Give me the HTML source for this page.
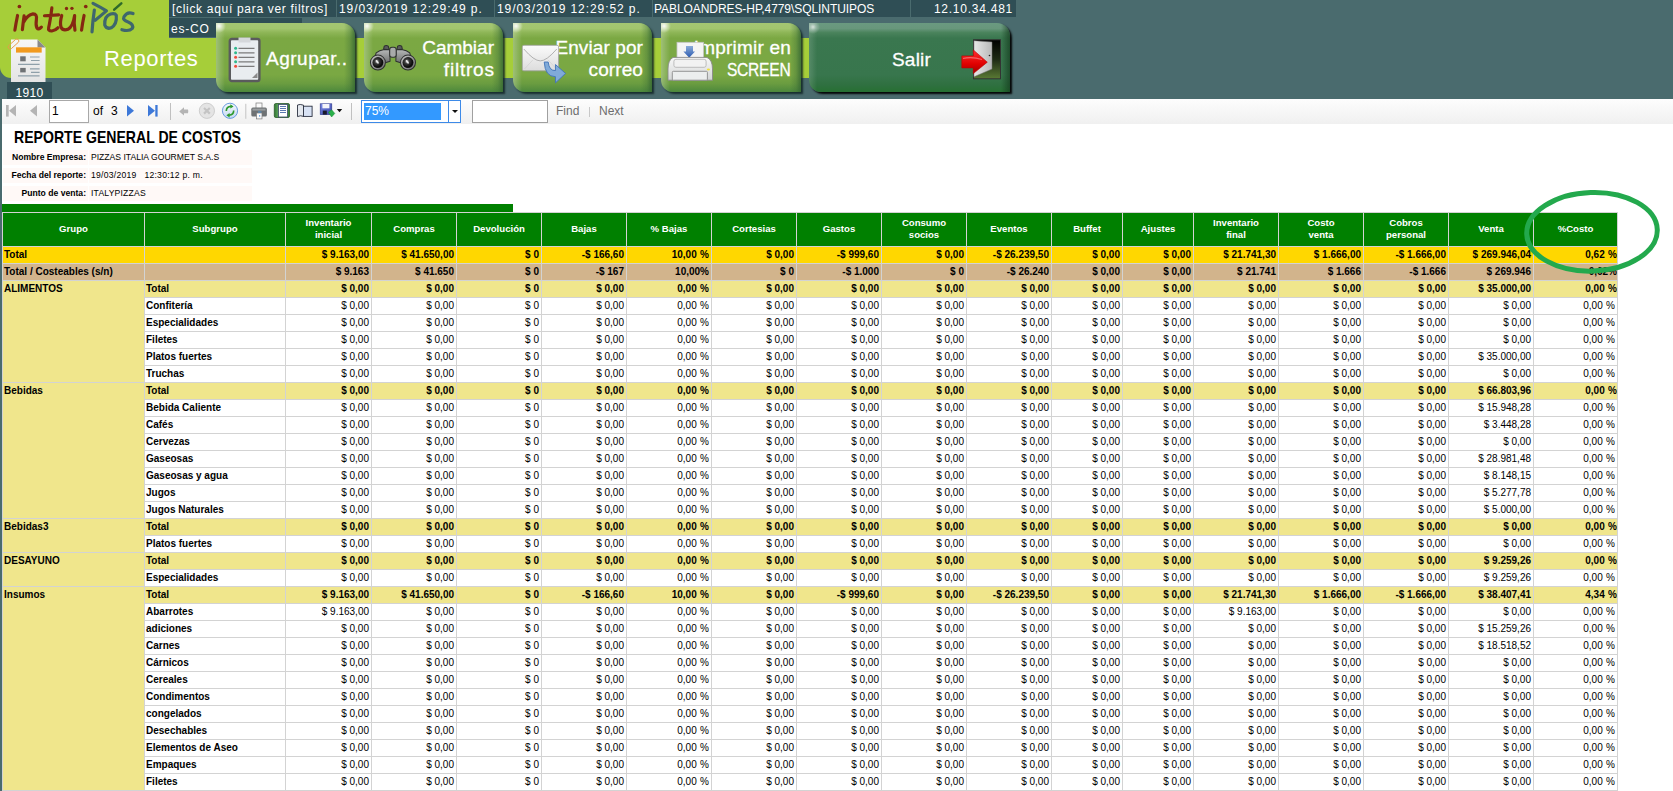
<!DOCTYPE html>
<html><head><meta charset="utf-8"><style>
*{margin:0;padding:0;box-sizing:border-box}
html,body{width:1673px;height:791px;overflow:hidden;background:#fff;font-family:"Liberation Sans",sans-serif;position:relative}
.cell,.hc,.tx{position:absolute}
.hc{background:#008000;color:#fff;font-weight:bold;font-size:9.6px;line-height:12px;padding-bottom:2px;display:flex;align-items:center;justify-content:center;text-align:center}
.tx{font-size:10px;line-height:16px;padding:0 2px 0 1px;color:#000;white-space:nowrap}
.b{font-weight:bold}
.ib{position:absolute;background:#2f4e55;color:#fff;font-size:12px;line-height:19px;white-space:nowrap;overflow:hidden;letter-spacing:0.3px}
.btn{position:absolute;top:23px;height:69px;border-radius:0 13px 0 12px;background:radial-gradient(circle at 3px 3px,rgba(255,255,255,.95) 0,rgba(255,255,255,.5) 3px,rgba(255,255,255,0) 7px),linear-gradient(90deg,rgba(255,255,255,.28) 0,rgba(255,255,255,.12) 5px,rgba(255,255,255,0) 9px),linear-gradient(270deg,rgba(50,100,50,.8) 0,rgba(60,110,55,.35) 5px,rgba(60,110,55,0) 11px),linear-gradient(#a4c672 0%,#a2c56e 8%,#8db556 14%,#7ba843 22%,#7aa843 75%,#6a9c40 88%,#4c883c 100%);box-shadow:2px 2px 2px rgba(15,35,35,.85)}
.btn.dk{background:radial-gradient(circle at 4px 4px,rgba(255,255,255,.7) 0,rgba(255,255,255,.3) 3px,rgba(255,255,255,0) 7px),linear-gradient(90deg,rgba(255,255,255,.15) 0,rgba(255,255,255,0) 8px),linear-gradient(270deg,rgba(20,60,30,.7) 0,rgba(20,60,30,0) 9px),linear-gradient(#6a9a80 0%,#68977c 8%,#4a835c 14%,#3a774f 22%,#38764d 75%,#2f7040 90%,#267032 100%);box-shadow:2px 2px 2px rgba(0,0,0,.95)}
.bt{position:absolute;color:#fff;font-size:19px;line-height:22px;white-space:nowrap;-webkit-text-stroke:0.3px #fff}
.bt.r{text-align:right}
.tb{position:absolute;top:99px;font-size:12px;line-height:25px}
.inf{position:absolute;background:#fff9f7;font-size:8.6px;line-height:15px;white-space:nowrap;padding:0 2px}
.n{font-weight:normal}
</style></head><body>
<div style="position:absolute;left:0;top:0;width:1673px;height:99px;background:#4a6b6e"></div>
<!-- lime area -->
<div style="position:absolute;left:0;top:0;width:169px;height:40px;background:#a6ce39"></div>
<div style="position:absolute;left:0;top:38px;width:809px;height:40px;background:#a6ce39;border-bottom-left-radius:11px"></div>
<!-- info boxes -->
<div class="ib" style="left:169px;top:0;width:167px;height:17px;padding-left:3px;letter-spacing:0.69px">[click aquí para ver filtros]</div>
<div class="ib" style="left:337px;top:0;width:157px;height:17px;padding-left:2px;letter-spacing:0.92px">19/03/2019 12:29:49 p.</div>
<div class="ib" style="left:495px;top:0;width:157px;height:17px;padding-left:2px;letter-spacing:0.92px">19/03/2019 12:29:52 p.</div>
<div class="ib" style="left:653px;top:0;width:257px;height:17px;padding-left:1px;letter-spacing:-0.07px">PABLOANDRES-HP,4779\SQLINTUIPOS</div>
<div class="ib" style="left:911px;top:0;width:105px;height:17px;text-align:right;padding-right:3px;letter-spacing:0.75px">12.10.34.481</div>
<div class="ib" style="left:169px;top:18px;width:133px;height:19px;padding-left:2px;line-height:22px;letter-spacing:0.8px">es-CO</div>
<!-- logo -->
<svg style="position:absolute;left:0;top:0" width="160" height="40" viewBox="0 0 160 40">
<g transform="translate(5,0) scale(0.08368)" fill="none" stroke-linecap="round" stroke-linejoin="round" stroke-width="38">
<g stroke="#852812">
<path d="M150,185 Q130,280 118,360"/>
<path d="M228,190 Q215,280 208,355 M222,265 Q270,175 335,165 Q385,165 375,235 Q365,300 382,335 Q400,360 435,325"/>
<path d="M560,95 Q540,250 522,330 Q512,372 560,370 Q600,365 632,332 M472,188 L640,178"/>
<path d="M678,185 Q655,265 668,322 Q692,372 752,350 Q812,318 832,185 M832,185 Q820,285 836,360"/>
<path d="M945,185 Q925,280 915,360"/>
</g>
<g fill="#852812"><circle cx="172" cy="78" r="22"/><circle cx="735" cy="102" r="20"/><circle cx="800" cy="100" r="20"/><circle cx="965" cy="78" r="22"/></g>
<g stroke="#3f676d">
<path d="M1068,120 Q1048,250 1040,380 M1052,40 Q1150,90 1212,130 Q1130,200 1078,242"/>
<path d="M1262,168 Q1185,192 1192,300 Q1210,352 1270,332 Q1340,292 1330,182 Q1312,152 1262,168"/>
<path d="M1530,162 Q1462,132 1422,200 Q1402,242 1472,262 Q1542,292 1522,340 Q1482,380 1397,355"/>
</g>
<path d="M1305,115 L1390,40" stroke="#2f6a2a" stroke-width="30"/>
</g>
</svg>
<!-- doc icon -->
<svg style="position:absolute;left:6px;top:36px" width="44" height="50" viewBox="0 0 44 50">
<defs><linearGradient id="pg" x1="0" x2="0" y1="0" y2="1"><stop offset="0" stop-color="#f7f7f7"/><stop offset="1" stop-color="#e4e4e4"/></linearGradient></defs>
<path d="M5,3.5 L31.5,3.5 L39.5,11.5 L39.5,46 L5,46 Z" fill="url(#pg)"/>
<path d="M31.5,3.5 L39.5,11.5 L31.5,11.5 Z" fill="#8a8a8a"/>
<rect x="10" y="11.3" width="25.7" height="5.3" fill="#f29a1e"/>
<rect x="14.2" y="20.3" width="5.5" height="5" fill="#6f7275"/>
<rect x="14.2" y="31.9" width="5.5" height="4.5" fill="#6f7275"/>
<g stroke="#8fa0aa" stroke-width="1.2"><path d="M24,21 H33.6 M25,24.5 H33.6 M12,28.4 H33.6 M24,32.8 H33.6 M25,36.3 H33.6 M12,39.8 H33.6"/></g>
<rect x="5.5" y="1.5" width="4" height="13" rx="2" transform="rotate(48 7.5 8)" fill="none" stroke="#e89a48" stroke-width="0.9"/>
</svg>
<div style="position:absolute;left:7px;top:82px;width:45px;height:17px;background:#2f4e55;color:#fff;font-size:12px;line-height:23px;text-align:center;letter-spacing:0.3px">1910</div>
<div style="position:absolute;left:104px;top:43.5px;color:#fff;font-size:22px;letter-spacing:0.65px;line-height:30px">Reportes</div>
<!-- buttons -->
<div class="btn" style="left:216px;width:139px"></div>
<div class="btn" style="left:364px;width:139px"></div>
<div class="btn" style="left:513px;width:139px"></div>
<div class="btn" style="left:661px;width:140px"></div>
<div class="btn dk" style="left:809px;width:201px"></div>
<div class="bt" style="left:266px;top:48px;letter-spacing:0.5px">Agrupar..</div>
<div class="bt r" style="right:1179px;top:36.5px"><span>Cambiar</span><br><span style="letter-spacing:0.8px;margin-right:-0.8px">filtros</span></div>
<div class="bt r" style="right:1030px;top:36.5px;letter-spacing:0.1px">Enviar por<br>correo</div>
<div class="bt r" style="right:882px;top:36.5px"><span style="letter-spacing:0.2px">Imprimir en</span><br><span style="display:inline-block;letter-spacing:-0.3px;margin-right:0.3px;transform:scaleX(0.82);transform-origin:100% 0">SCREEN</span></div>
<div class="bt" style="left:892px;top:48.5px;letter-spacing:0.2px">Salir</div>
<!-- clipboard icon -->
<svg style="position:absolute;left:228px;top:37px" width="34" height="46" viewBox="0 0 34 46">
<rect x="1.8" y="2" width="29.6" height="42" rx="2" fill="#e9edf0" stroke="#5a5b5d" stroke-width="2.4"/>
<rect x="10.5" y="0.5" width="12" height="5" fill="#d5d8db"/>
<g fill="#2fb88c"><circle cx="7.6" cy="11.3" r="1.5"/><circle cx="7.6" cy="15.8" r="1.5"/><circle cx="7.6" cy="24.8" r="1.5"/></g>
<g fill="#ef4b3b"><circle cx="7.6" cy="20.3" r="1.5"/><circle cx="7.6" cy="29.3" r="1.5"/></g>
<g stroke="#7b7b7b" stroke-width="1.2"><path d="M10.5,11.3 H26.5 M10.5,15.8 H26.5 M10.5,20.3 H26.5 M10.5,24.8 H26.5 M10.5,29.3 H26.5"/></g>
<path d="M24,41 L29.5,35.5 L29.5,41 Z" fill="#8a8a8a"/>
</svg>
<!-- binoculars -->
<svg style="position:absolute;left:364px;top:38px" width="60" height="40" viewBox="0 0 1186 791">
<defs>
<radialGradient id="lns" cx="0.4" cy="0.4" r="0.7"><stop offset="0" stop-color="#bdbdbd"/><stop offset="0.3" stop-color="#3a3a3a"/><stop offset="0.75" stop-color="#0a0a0a"/><stop offset="1" stop-color="#2a2a2a"/></radialGradient>
<linearGradient id="rng" x1="0" y1="0" x2="1" y2="1"><stop offset="0" stop-color="#c8c8c8"/><stop offset="1" stop-color="#6a6a6a"/></linearGradient>
<linearGradient id="bdy" x1="0" y1="0" x2="0" y2="1"><stop offset="0" stop-color="#b8baba"/><stop offset="1" stop-color="#6e7070"/></linearGradient>
</defs>
<g stroke="#2e3030" stroke-width="20" stroke-linejoin="round">
<path d="M385,230 L400,160 Q440,135 480,160 L495,230 Z" fill="#5a5c5c"/>
<path d="M650,230 L665,160 Q705,135 745,160 L760,230 Z" fill="#5a5c5c"/>
<path d="M240,295 Q300,240 400,225 L510,232 L515,460 L420,490 L205,430 Z" fill="url(#bdy)"/>
<path d="M905,295 Q845,240 745,225 L635,232 L630,460 L725,490 L940,430 Z" fill="url(#bdy)"/>
<rect x="508" y="185" width="128" height="195" rx="45" fill="#a8aaaa"/>
<circle cx="275" cy="485" r="148" fill="url(#rng)"/>
<circle cx="870" cy="485" r="148" fill="url(#rng)"/>
</g>
<circle cx="275" cy="485" r="108" fill="url(#lns)"/>
<circle cx="870" cy="485" r="108" fill="url(#lns)"/>
<ellipse cx="262" cy="472" rx="42" ry="18" transform="rotate(50 262 472)" fill="#e8e8e8"/>
<ellipse cx="857" cy="472" rx="42" ry="18" transform="rotate(50 857 472)" fill="#e8e8e8"/>
</svg>
<!-- envelope -->
<svg style="position:absolute;left:515px;top:38px" width="60" height="50" viewBox="0 0 949 791">
<defs><linearGradient id="env" x1="0" x2="0" y1="0" y2="1"><stop offset="0" stop-color="#fbfbfb"/><stop offset="1" stop-color="#dcdcdc"/></linearGradient></defs>
<rect x="115" y="115" width="575" height="405" rx="25" fill="url(#env)" stroke="#9a9a9a" stroke-width="12"/>
<path d="M150,490 L285,345 M655,490 L520,345" stroke="#c8c8c8" stroke-width="8" fill="none"/>
<path d="M140,175 Q300,362 400,362 Q500,362 660,175" stroke="#a8a8a8" stroke-width="14" fill="none"/>
<path d="M462,380 L525,380 Q540,520 640,515 L640,420 L800,560 L640,710 L640,612 Q475,612 462,380 Z" fill="#80aad8" stroke="#3f72b8" stroke-width="14" stroke-linejoin="round"/>
</svg>
<!-- printer -->
<svg style="position:absolute;left:665px;top:38px" width="50" height="44" viewBox="0 0 50 44">
<defs><linearGradient id="pr" x1="0" x2="0" y1="0" y2="1"><stop offset="0" stop-color="#f8f8f8"/><stop offset="1" stop-color="#d4d6d6"/></linearGradient>
<linearGradient id="ar" x1="0" x2="0" y1="0" y2="1"><stop offset="0" stop-color="#8aaad8"/><stop offset="1" stop-color="#2a5ab0"/></linearGradient></defs>
<rect x="12" y="4.3" width="26.5" height="17" fill="#f4f4f4" stroke="#c4c4c4" stroke-width="0.8"/>
<path d="M21,8 H28 V13.5 H30 L24.2,19.8 L18.4,13.5 H21 Z" fill="url(#ar)"/>
<path d="M3,42.2 L3,31 Q3,22 8,19.4 L42,19.4 Q47.5,22 47.5,31 L47.5,42.2 Z" fill="url(#pr)" stroke="#8a8a8a" stroke-width="0.9"/>
<rect x="8.9" y="21.3" width="32.2" height="8" rx="2" fill="#f2f2f2" stroke="#a8a8a8" stroke-width="0.7"/>
<rect x="7.3" y="33.3" width="35.1" height="8.9" rx="1" fill="#eceeee" stroke="#8a8a8a" stroke-width="0.9"/>
<ellipse cx="43.4" cy="31.4" rx="1.6" ry="1" fill="#f0e040"/>
</svg>
<!-- door -->
<svg style="position:absolute;left:960px;top:38px" width="44" height="44" viewBox="0 0 44 44">
<defs><linearGradient id="dr" x1="0" x2="0" y1="0" y2="1"><stop offset="0" stop-color="#000"/><stop offset="0.5" stop-color="#1e2a14"/><stop offset="1" stop-color="#5a7a34"/></linearGradient>
<linearGradient id="dw" x1="0" x2="1"><stop offset="0" stop-color="#e8e8e8"/><stop offset="1" stop-color="#b8b8b8"/></linearGradient>
<linearGradient id="ra" x1="0" x2="0" y1="0" y2="1"><stop offset="0" stop-color="#ff3030"/><stop offset="0.6" stop-color="#e00000"/><stop offset="1" stop-color="#a00000"/></linearGradient></defs>
<rect x="13.5" y="1.8" width="27" height="39" fill="url(#dr)" stroke="#333" stroke-width="1"/>
<path d="M14,2.7 L32,4 L32,31 L14,38.8 Z" fill="url(#dw)" stroke="#777" stroke-width="0.5"/>
<circle cx="29.5" cy="17.5" r="0.8" fill="#222"/>
<path d="M1.8,17.9 L13.3,17.9 L13.3,11.9 L27.3,24.2 L13.3,35.6 L13.3,29.9 L1.8,29.9 Z" fill="url(#ra)" stroke="#b00" stroke-width="0.6"/><path d="M3,20.5 Q12,18.5 22,21.5" stroke="rgba(255,255,255,.35)" stroke-width="1.2" fill="none"/>
</svg>
<!-- toolbar -->
<div style="position:absolute;left:0;top:99px;width:1673px;height:25px;background:linear-gradient(#fdfdfd,#f0f0f0)"></div>
<div style="position:absolute;left:0;top:123px;width:2px;height:668px;background:#4a6b6e"></div>
<div style="position:absolute;left:0;top:99px;width:2px;height:25px;background:#4a6b6e"></div>
<svg style="position:absolute;left:0;top:99px" width="640" height="25" viewBox="0 0 640 25">
<g fill="#b4b4b4"><rect x="6" y="6" width="2.7" height="11.6"/><path d="M16,6 L16,17.6 L9,11.8 Z"/><path d="M37,6 L37,17.6 L30,11.8 Z"/></g>
<rect x="49.5" y="1.5" width="39" height="22" fill="#fff" stroke="#a8a8a8"/>
<g fill="#3d78d8"><path d="M127,6 L127,17.6 L134,11.8 Z"/><path d="M148,6 L148,17.6 L155,11.8 Z"/><rect x="155.3" y="6" width="2.3" height="11.6"/></g>
<rect x="170" y="4" width="1" height="17" fill="#c0c0c0"/>
<defs>
<linearGradient id="rf" x1="0" y1="0" x2="0" y2="1"><stop offset="0" stop-color="#f4f8fd"/><stop offset="1" stop-color="#c4d8f2"/></linearGradient>
<linearGradient id="pgr" x1="0" y1="0" x2="1" y2="0"><stop offset="0" stop-color="#2f7a2f"/><stop offset="0.5" stop-color="#8cc48c"/><stop offset="1" stop-color="#2f7a2f"/></linearGradient>
<linearGradient id="fl" x1="0" y1="0" x2="1" y2="1"><stop offset="0" stop-color="#7a8ae8"/><stop offset="1" stop-color="#3a48a8"/></linearGradient>
</defs>
<path d="M179.2,12.4 L184,8.2 L184,10.6 L188,10.6 Q188.6,12.4 188,14.2 L184,14.2 L184,16.6 Z" fill="#b4b4b4"/>
<circle cx="206.9" cy="11.8" r="7.6" fill="#e4e4e4" stroke="#cdcdcd" stroke-width="1"/>
<path d="M204,9 L209.8,14.6 M209.8,9 L204,14.6" stroke="#c4c4c4" stroke-width="2.2"/>
<circle cx="230" cy="11.8" r="7.6" fill="url(#rf)" stroke="#5a92dc" stroke-width="0.9"/>
<path d="M226.3,12 Q226.3,7.6 231,7.4" stroke="#2c9a2c" stroke-width="1.6" fill="none"/><path d="M230.4,5.3 L233.6,7.4 L230.4,9.6 Z" fill="#2c9a2c"/>
<path d="M233.7,11.6 Q233.7,16 229,16.2" stroke="#2c9a2c" stroke-width="1.6" fill="none"/><path d="M229.6,14 L226.4,16.2 L229.6,18.4 Z" fill="#2c9a2c"/>
<rect x="245.3" y="4.8" width="1" height="15" fill="#c4c4c4"/>
<rect x="256" y="4" width="6" height="5.5" fill="#fafafa" stroke="#7a7a7a" stroke-width="0.7"/>
<rect x="251.3" y="8.6" width="15.6" height="9" rx="1.6" fill="#6e7274"/>
<rect x="252.5" y="9.6" width="13" height="2" fill="#9a9ea0"/>
<rect x="258" y="12.6" width="3.5" height="1" fill="#4aa0e8"/>
<rect x="256.5" y="14" width="5.5" height="5.9" fill="#fafafa" stroke="#7a7a7a" stroke-width="0.7"/>
<rect x="259" y="16.3" width="1.2" height="1.2" fill="#3a8ae0"/>
<rect x="274.3" y="4.5" width="15.2" height="14" rx="1.5" fill="url(#pgr)" stroke="#2a5a2a" stroke-width="0.8"/>
<rect x="278.5" y="5.5" width="9" height="12.5" fill="#ffffff" stroke="#3a4a6a" stroke-width="0.8"/>
<path d="M280,7.5 H286 M280,9.5 H286 M280,11.5 H286 M280,13.5 H286" stroke="#5a78b0" stroke-width="1"/>
<path d="M297.5,6 Q300,4.8 303.5,6.2 L303.5,17.4 Q300.5,16 297.5,17.6 Z" fill="#e4e8ee" stroke="#2a3040" stroke-width="0.9"/>
<rect x="303.5" y="7.2" width="8.6" height="10.2" fill="#d8e2f4" stroke="#2a3040" stroke-width="0.9"/>
<rect x="320.2" y="4.8" width="11.6" height="10.8" fill="url(#fl)" stroke="#2a3488" stroke-width="0.6"/>
<rect x="322.4" y="5" width="7" height="4.3" fill="#f4f4fa"/>
<rect x="322.8" y="11.6" width="4" height="4" fill="#1a1a2a"/>
<path d="M328.4,13.2 L331.6,10.8 L334.8,14.4 L331.6,18 Z" fill="#2ab04a" stroke="#178a30" stroke-width="0.5"/>
<path d="M336.8,10 L342.2,10 L339.5,13.2 Z" fill="#111"/>
<rect x="351" y="4" width="1" height="17" fill="#c0c0c0"/>
<rect x="361.5" y="1.5" width="99" height="22" fill="#fff" stroke="#3d8ae8"/>
<rect x="364" y="4" width="77" height="17" fill="#3399ff"/>
<rect x="448" y="2" width="1" height="21" fill="#3d8ae8"/>
<path d="M452,11 L458,11 L455,14 Z" fill="#111"/>
<rect x="472.5" y="1.5" width="75" height="22" fill="#fff" stroke="#a0a0a0"/>
<rect x="589" y="8" width="1" height="10" fill="#c8c8c8"/>
</svg>
<div class="tb" style="left:52px;color:#000">1</div>
<div class="tb" style="left:93px;color:#000">of</div>
<div class="tb" style="left:111px;color:#000">3</div>
<div class="tb" style="left:365px;color:#fff">75%</div>
<div class="tb" style="left:556px;color:#6d6d6d">Find</div>
<div class="tb" style="left:599px;color:#6d6d6d">Next</div>
<!-- report header -->
<div style="position:absolute;left:14px;top:127.5px;font-weight:bold;font-size:15.7px;line-height:20px;transform:scaleX(0.897);transform-origin:0 0;white-space:nowrap">REPORTE GENERAL DE COSTOS</div>
<div class="inf" style="left:3px;top:150px;width:85px;height:15px;text-align:right;font-weight:bold">Nombre Empresa:</div>
<div class="inf" style="left:89px;top:150px;width:163px;height:15px">PIZZAS ITALIA GOURMET S.A.S</div>
<div class="inf" style="left:3px;top:168px;width:85px;height:15px;text-align:right;font-weight:bold">Fecha del reporte:</div>
<div class="inf" style="left:89px;top:168px;width:163px;height:15px;letter-spacing:0.25px">19/03/2019 &nbsp; 12:30:12 p. m.</div>
<div class="inf" style="left:3px;top:186px;width:85px;height:15px;text-align:right;font-weight:bold">Punto de venta:</div>
<div class="inf" style="left:89px;top:186px;width:163px;height:15px;letter-spacing:0.2px">ITALYPIZZAS</div>
<div style="position:absolute;left:2px;top:204px;width:511px;height:8px;background:#008000"></div>

<div style="position:absolute;left:2px;top:212px;width:1616px;height:579px;background:#d3d3d3"></div>
<div class="hc" style="left:3px;top:213px;width:141px;height:33px"><span>Grupo</span></div>
<div class="hc" style="left:145px;top:213px;width:140px;height:33px"><span>Subgrupo</span></div>
<div class="hc" style="left:286px;top:213px;width:85px;height:33px"><span>Inventario<br>inicial</span></div>
<div class="hc" style="left:372px;top:213px;width:84px;height:33px"><span>Compras</span></div>
<div class="hc" style="left:457px;top:213px;width:84px;height:33px"><span>Devolución</span></div>
<div class="hc" style="left:542px;top:213px;width:84px;height:33px"><span>Bajas</span></div>
<div class="hc" style="left:627px;top:213px;width:84px;height:33px"><span>% Bajas</span></div>
<div class="hc" style="left:712px;top:213px;width:84px;height:33px"><span>Cortesias</span></div>
<div class="hc" style="left:797px;top:213px;width:84px;height:33px"><span>Gastos</span></div>
<div class="hc" style="left:882px;top:213px;width:84px;height:33px"><span>Consumo<br>socios</span></div>
<div class="hc" style="left:967px;top:213px;width:84px;height:33px"><span>Eventos</span></div>
<div class="hc" style="left:1052px;top:213px;width:70px;height:33px"><span>Buffet</span></div>
<div class="hc" style="left:1123px;top:213px;width:70px;height:33px"><span>Ajustes</span></div>
<div class="hc" style="left:1194px;top:213px;width:84px;height:33px"><span>Inventario<br>final</span></div>
<div class="hc" style="left:1279px;top:213px;width:84px;height:33px"><span>Costo<br>venta</span></div>
<div class="hc" style="left:1364px;top:213px;width:84px;height:33px"><span>Cobros<br>personal</span></div>
<div class="hc" style="left:1449px;top:213px;width:84px;height:33px"><span>Venta</span></div>
<div class="hc" style="left:1534px;top:213px;width:83px;height:33px"><span>%Costo</span></div>
<div class="cell" style="left:3px;top:281px;width:141px;height:101px;background:#f0e68c"></div>
<div class="cell" style="left:3px;top:383px;width:141px;height:135px;background:#f0e68c"></div>
<div class="cell" style="left:3px;top:519px;width:141px;height:33px;background:#f0e68c"></div>
<div class="cell" style="left:3px;top:553px;width:141px;height:33px;background:#f0e68c"></div>
<div class="cell" style="left:3px;top:587px;width:141px;height:203px;background:#f0e68c"></div>
<div class="cell" style="left:3px;top:247px;width:141px;height:16px;background:#ffd700"></div>
<div class="tx b" style="left:3px;top:247px;width:141px;height:16px;text-align:left;white-space:nowrap;overflow:visible">Total</div>
<div class="cell tx b" style="left:145px;top:247px;width:140px;height:16px;background:#ffd700;text-align:left"></div>
<div class="cell tx b" style="left:286px;top:247px;width:85px;height:16px;background:#ffd700;text-align:right">$ 9.163,00</div>
<div class="cell tx b" style="left:372px;top:247px;width:84px;height:16px;background:#ffd700;text-align:right">$ 41.650,00</div>
<div class="cell tx b" style="left:457px;top:247px;width:84px;height:16px;background:#ffd700;text-align:right">$ 0</div>
<div class="cell tx b" style="left:542px;top:247px;width:84px;height:16px;background:#ffd700;text-align:right">-$ 166,60</div>
<div class="cell tx b" style="left:627px;top:247px;width:84px;height:16px;background:#ffd700;text-align:right;word-spacing:0.6px">10,00 %</div>
<div class="cell tx b" style="left:712px;top:247px;width:84px;height:16px;background:#ffd700;text-align:right">$ 0,00</div>
<div class="cell tx b" style="left:797px;top:247px;width:84px;height:16px;background:#ffd700;text-align:right">-$ 999,60</div>
<div class="cell tx b" style="left:882px;top:247px;width:84px;height:16px;background:#ffd700;text-align:right">$ 0,00</div>
<div class="cell tx b" style="left:967px;top:247px;width:84px;height:16px;background:#ffd700;text-align:right">-$ 26.239,50</div>
<div class="cell tx b" style="left:1052px;top:247px;width:70px;height:16px;background:#ffd700;text-align:right">$ 0,00</div>
<div class="cell tx b" style="left:1123px;top:247px;width:70px;height:16px;background:#ffd700;text-align:right">$ 0,00</div>
<div class="cell tx b" style="left:1194px;top:247px;width:84px;height:16px;background:#ffd700;text-align:right">$ 21.741,30</div>
<div class="cell tx b" style="left:1279px;top:247px;width:84px;height:16px;background:#ffd700;text-align:right">$ 1.666,00</div>
<div class="cell tx b" style="left:1364px;top:247px;width:84px;height:16px;background:#ffd700;text-align:right">-$ 1.666,00</div>
<div class="cell tx b" style="left:1449px;top:247px;width:84px;height:16px;background:#ffd700;text-align:right">$ 269.946,04</div>
<div class="cell tx b" style="left:1534px;top:247px;width:83px;height:16px;background:#ffd700;text-align:right;padding-right:0;word-spacing:0.6px;overflow:hidden">0,62 %</div>
<div class="cell" style="left:3px;top:264px;width:141px;height:16px;background:#d2b48c"></div>
<div class="tx b" style="left:3px;top:264px;width:141px;height:16px;text-align:left;white-space:nowrap;overflow:visible">Total / Costeables (s/n)</div>
<div class="cell tx b" style="left:145px;top:264px;width:140px;height:16px;background:#d2b48c;text-align:left"></div>
<div class="cell tx b" style="left:286px;top:264px;width:85px;height:16px;background:#d2b48c;text-align:right">$ 9.163</div>
<div class="cell tx b" style="left:372px;top:264px;width:84px;height:16px;background:#d2b48c;text-align:right">$ 41.650</div>
<div class="cell tx b" style="left:457px;top:264px;width:84px;height:16px;background:#d2b48c;text-align:right">$ 0</div>
<div class="cell tx b" style="left:542px;top:264px;width:84px;height:16px;background:#d2b48c;text-align:right">-$ 167</div>
<div class="cell tx b" style="left:627px;top:264px;width:84px;height:16px;background:#d2b48c;text-align:right;word-spacing:0.6px">10,00%</div>
<div class="cell tx b" style="left:712px;top:264px;width:84px;height:16px;background:#d2b48c;text-align:right">$ 0</div>
<div class="cell tx b" style="left:797px;top:264px;width:84px;height:16px;background:#d2b48c;text-align:right">-$ 1.000</div>
<div class="cell tx b" style="left:882px;top:264px;width:84px;height:16px;background:#d2b48c;text-align:right">$ 0</div>
<div class="cell tx b" style="left:967px;top:264px;width:84px;height:16px;background:#d2b48c;text-align:right">-$ 26.240</div>
<div class="cell tx b" style="left:1052px;top:264px;width:70px;height:16px;background:#d2b48c;text-align:right">$ 0,00</div>
<div class="cell tx b" style="left:1123px;top:264px;width:70px;height:16px;background:#d2b48c;text-align:right">$ 0,00</div>
<div class="cell tx b" style="left:1194px;top:264px;width:84px;height:16px;background:#d2b48c;text-align:right">$ 21.741</div>
<div class="cell tx b" style="left:1279px;top:264px;width:84px;height:16px;background:#d2b48c;text-align:right">$ 1.666</div>
<div class="cell tx b" style="left:1364px;top:264px;width:84px;height:16px;background:#d2b48c;text-align:right">-$ 1.666</div>
<div class="cell tx b" style="left:1449px;top:264px;width:84px;height:16px;background:#d2b48c;text-align:right">$ 269.946</div>
<div class="cell tx b" style="left:1534px;top:264px;width:83px;height:16px;background:#d2b48c;text-align:right;padding-right:0;word-spacing:0.6px;overflow:hidden">0,62%</div>
<div class="tx b" style="left:3px;top:281px;width:141px;height:16px;text-align:left">ALIMENTOS</div>
<div class="cell tx b" style="left:145px;top:281px;width:140px;height:16px;background:#f0e68c;text-align:left">Total</div>
<div class="cell tx b" style="left:286px;top:281px;width:85px;height:16px;background:#f0e68c;text-align:right">$ 0,00</div>
<div class="cell tx b" style="left:372px;top:281px;width:84px;height:16px;background:#f0e68c;text-align:right">$ 0,00</div>
<div class="cell tx b" style="left:457px;top:281px;width:84px;height:16px;background:#f0e68c;text-align:right">$ 0</div>
<div class="cell tx b" style="left:542px;top:281px;width:84px;height:16px;background:#f0e68c;text-align:right">$ 0,00</div>
<div class="cell tx b" style="left:627px;top:281px;width:84px;height:16px;background:#f0e68c;text-align:right;word-spacing:0.6px">0,00 %</div>
<div class="cell tx b" style="left:712px;top:281px;width:84px;height:16px;background:#f0e68c;text-align:right">$ 0,00</div>
<div class="cell tx b" style="left:797px;top:281px;width:84px;height:16px;background:#f0e68c;text-align:right">$ 0,00</div>
<div class="cell tx b" style="left:882px;top:281px;width:84px;height:16px;background:#f0e68c;text-align:right">$ 0,00</div>
<div class="cell tx b" style="left:967px;top:281px;width:84px;height:16px;background:#f0e68c;text-align:right">$ 0,00</div>
<div class="cell tx b" style="left:1052px;top:281px;width:70px;height:16px;background:#f0e68c;text-align:right">$ 0,00</div>
<div class="cell tx b" style="left:1123px;top:281px;width:70px;height:16px;background:#f0e68c;text-align:right">$ 0,00</div>
<div class="cell tx b" style="left:1194px;top:281px;width:84px;height:16px;background:#f0e68c;text-align:right">$ 0,00</div>
<div class="cell tx b" style="left:1279px;top:281px;width:84px;height:16px;background:#f0e68c;text-align:right">$ 0,00</div>
<div class="cell tx b" style="left:1364px;top:281px;width:84px;height:16px;background:#f0e68c;text-align:right">$ 0,00</div>
<div class="cell tx b" style="left:1449px;top:281px;width:84px;height:16px;background:#f0e68c;text-align:right">$ 35.000,00</div>
<div class="cell tx b" style="left:1534px;top:281px;width:83px;height:16px;background:#f0e68c;text-align:right;padding-right:0;word-spacing:0.6px;overflow:hidden">0,00 %</div>
<div class="cell tx b" style="left:145px;top:298px;width:140px;height:16px;background:#ffffff;text-align:left">Confitería</div>
<div class="cell tx n" style="left:286px;top:298px;width:85px;height:16px;background:#ffffff;text-align:right">$ 0,00</div>
<div class="cell tx n" style="left:372px;top:298px;width:84px;height:16px;background:#ffffff;text-align:right">$ 0,00</div>
<div class="cell tx n" style="left:457px;top:298px;width:84px;height:16px;background:#ffffff;text-align:right">$ 0</div>
<div class="cell tx n" style="left:542px;top:298px;width:84px;height:16px;background:#ffffff;text-align:right">$ 0,00</div>
<div class="cell tx n" style="left:627px;top:298px;width:84px;height:16px;background:#ffffff;text-align:right;word-spacing:0.6px">0,00 %</div>
<div class="cell tx n" style="left:712px;top:298px;width:84px;height:16px;background:#ffffff;text-align:right">$ 0,00</div>
<div class="cell tx n" style="left:797px;top:298px;width:84px;height:16px;background:#ffffff;text-align:right">$ 0,00</div>
<div class="cell tx n" style="left:882px;top:298px;width:84px;height:16px;background:#ffffff;text-align:right">$ 0,00</div>
<div class="cell tx n" style="left:967px;top:298px;width:84px;height:16px;background:#ffffff;text-align:right">$ 0,00</div>
<div class="cell tx n" style="left:1052px;top:298px;width:70px;height:16px;background:#ffffff;text-align:right">$ 0,00</div>
<div class="cell tx n" style="left:1123px;top:298px;width:70px;height:16px;background:#ffffff;text-align:right">$ 0,00</div>
<div class="cell tx n" style="left:1194px;top:298px;width:84px;height:16px;background:#ffffff;text-align:right">$ 0,00</div>
<div class="cell tx n" style="left:1279px;top:298px;width:84px;height:16px;background:#ffffff;text-align:right">$ 0,00</div>
<div class="cell tx n" style="left:1364px;top:298px;width:84px;height:16px;background:#ffffff;text-align:right">$ 0,00</div>
<div class="cell tx n" style="left:1449px;top:298px;width:84px;height:16px;background:#ffffff;text-align:right">$ 0,00</div>
<div class="cell tx n" style="left:1534px;top:298px;width:83px;height:16px;background:#ffffff;text-align:right;word-spacing:0.6px">0,00 %</div>
<div class="cell tx b" style="left:145px;top:315px;width:140px;height:16px;background:#ffffff;text-align:left">Especialidades</div>
<div class="cell tx n" style="left:286px;top:315px;width:85px;height:16px;background:#ffffff;text-align:right">$ 0,00</div>
<div class="cell tx n" style="left:372px;top:315px;width:84px;height:16px;background:#ffffff;text-align:right">$ 0,00</div>
<div class="cell tx n" style="left:457px;top:315px;width:84px;height:16px;background:#ffffff;text-align:right">$ 0</div>
<div class="cell tx n" style="left:542px;top:315px;width:84px;height:16px;background:#ffffff;text-align:right">$ 0,00</div>
<div class="cell tx n" style="left:627px;top:315px;width:84px;height:16px;background:#ffffff;text-align:right;word-spacing:0.6px">0,00 %</div>
<div class="cell tx n" style="left:712px;top:315px;width:84px;height:16px;background:#ffffff;text-align:right">$ 0,00</div>
<div class="cell tx n" style="left:797px;top:315px;width:84px;height:16px;background:#ffffff;text-align:right">$ 0,00</div>
<div class="cell tx n" style="left:882px;top:315px;width:84px;height:16px;background:#ffffff;text-align:right">$ 0,00</div>
<div class="cell tx n" style="left:967px;top:315px;width:84px;height:16px;background:#ffffff;text-align:right">$ 0,00</div>
<div class="cell tx n" style="left:1052px;top:315px;width:70px;height:16px;background:#ffffff;text-align:right">$ 0,00</div>
<div class="cell tx n" style="left:1123px;top:315px;width:70px;height:16px;background:#ffffff;text-align:right">$ 0,00</div>
<div class="cell tx n" style="left:1194px;top:315px;width:84px;height:16px;background:#ffffff;text-align:right">$ 0,00</div>
<div class="cell tx n" style="left:1279px;top:315px;width:84px;height:16px;background:#ffffff;text-align:right">$ 0,00</div>
<div class="cell tx n" style="left:1364px;top:315px;width:84px;height:16px;background:#ffffff;text-align:right">$ 0,00</div>
<div class="cell tx n" style="left:1449px;top:315px;width:84px;height:16px;background:#ffffff;text-align:right">$ 0,00</div>
<div class="cell tx n" style="left:1534px;top:315px;width:83px;height:16px;background:#ffffff;text-align:right;word-spacing:0.6px">0,00 %</div>
<div class="cell tx b" style="left:145px;top:332px;width:140px;height:16px;background:#ffffff;text-align:left">Filetes</div>
<div class="cell tx n" style="left:286px;top:332px;width:85px;height:16px;background:#ffffff;text-align:right">$ 0,00</div>
<div class="cell tx n" style="left:372px;top:332px;width:84px;height:16px;background:#ffffff;text-align:right">$ 0,00</div>
<div class="cell tx n" style="left:457px;top:332px;width:84px;height:16px;background:#ffffff;text-align:right">$ 0</div>
<div class="cell tx n" style="left:542px;top:332px;width:84px;height:16px;background:#ffffff;text-align:right">$ 0,00</div>
<div class="cell tx n" style="left:627px;top:332px;width:84px;height:16px;background:#ffffff;text-align:right;word-spacing:0.6px">0,00 %</div>
<div class="cell tx n" style="left:712px;top:332px;width:84px;height:16px;background:#ffffff;text-align:right">$ 0,00</div>
<div class="cell tx n" style="left:797px;top:332px;width:84px;height:16px;background:#ffffff;text-align:right">$ 0,00</div>
<div class="cell tx n" style="left:882px;top:332px;width:84px;height:16px;background:#ffffff;text-align:right">$ 0,00</div>
<div class="cell tx n" style="left:967px;top:332px;width:84px;height:16px;background:#ffffff;text-align:right">$ 0,00</div>
<div class="cell tx n" style="left:1052px;top:332px;width:70px;height:16px;background:#ffffff;text-align:right">$ 0,00</div>
<div class="cell tx n" style="left:1123px;top:332px;width:70px;height:16px;background:#ffffff;text-align:right">$ 0,00</div>
<div class="cell tx n" style="left:1194px;top:332px;width:84px;height:16px;background:#ffffff;text-align:right">$ 0,00</div>
<div class="cell tx n" style="left:1279px;top:332px;width:84px;height:16px;background:#ffffff;text-align:right">$ 0,00</div>
<div class="cell tx n" style="left:1364px;top:332px;width:84px;height:16px;background:#ffffff;text-align:right">$ 0,00</div>
<div class="cell tx n" style="left:1449px;top:332px;width:84px;height:16px;background:#ffffff;text-align:right">$ 0,00</div>
<div class="cell tx n" style="left:1534px;top:332px;width:83px;height:16px;background:#ffffff;text-align:right;word-spacing:0.6px">0,00 %</div>
<div class="cell tx b" style="left:145px;top:349px;width:140px;height:16px;background:#ffffff;text-align:left">Platos fuertes</div>
<div class="cell tx n" style="left:286px;top:349px;width:85px;height:16px;background:#ffffff;text-align:right">$ 0,00</div>
<div class="cell tx n" style="left:372px;top:349px;width:84px;height:16px;background:#ffffff;text-align:right">$ 0,00</div>
<div class="cell tx n" style="left:457px;top:349px;width:84px;height:16px;background:#ffffff;text-align:right">$ 0</div>
<div class="cell tx n" style="left:542px;top:349px;width:84px;height:16px;background:#ffffff;text-align:right">$ 0,00</div>
<div class="cell tx n" style="left:627px;top:349px;width:84px;height:16px;background:#ffffff;text-align:right;word-spacing:0.6px">0,00 %</div>
<div class="cell tx n" style="left:712px;top:349px;width:84px;height:16px;background:#ffffff;text-align:right">$ 0,00</div>
<div class="cell tx n" style="left:797px;top:349px;width:84px;height:16px;background:#ffffff;text-align:right">$ 0,00</div>
<div class="cell tx n" style="left:882px;top:349px;width:84px;height:16px;background:#ffffff;text-align:right">$ 0,00</div>
<div class="cell tx n" style="left:967px;top:349px;width:84px;height:16px;background:#ffffff;text-align:right">$ 0,00</div>
<div class="cell tx n" style="left:1052px;top:349px;width:70px;height:16px;background:#ffffff;text-align:right">$ 0,00</div>
<div class="cell tx n" style="left:1123px;top:349px;width:70px;height:16px;background:#ffffff;text-align:right">$ 0,00</div>
<div class="cell tx n" style="left:1194px;top:349px;width:84px;height:16px;background:#ffffff;text-align:right">$ 0,00</div>
<div class="cell tx n" style="left:1279px;top:349px;width:84px;height:16px;background:#ffffff;text-align:right">$ 0,00</div>
<div class="cell tx n" style="left:1364px;top:349px;width:84px;height:16px;background:#ffffff;text-align:right">$ 0,00</div>
<div class="cell tx n" style="left:1449px;top:349px;width:84px;height:16px;background:#ffffff;text-align:right">$ 35.000,00</div>
<div class="cell tx n" style="left:1534px;top:349px;width:83px;height:16px;background:#ffffff;text-align:right;word-spacing:0.6px">0,00 %</div>
<div class="cell tx b" style="left:145px;top:366px;width:140px;height:16px;background:#ffffff;text-align:left">Truchas</div>
<div class="cell tx n" style="left:286px;top:366px;width:85px;height:16px;background:#ffffff;text-align:right">$ 0,00</div>
<div class="cell tx n" style="left:372px;top:366px;width:84px;height:16px;background:#ffffff;text-align:right">$ 0,00</div>
<div class="cell tx n" style="left:457px;top:366px;width:84px;height:16px;background:#ffffff;text-align:right">$ 0</div>
<div class="cell tx n" style="left:542px;top:366px;width:84px;height:16px;background:#ffffff;text-align:right">$ 0,00</div>
<div class="cell tx n" style="left:627px;top:366px;width:84px;height:16px;background:#ffffff;text-align:right;word-spacing:0.6px">0,00 %</div>
<div class="cell tx n" style="left:712px;top:366px;width:84px;height:16px;background:#ffffff;text-align:right">$ 0,00</div>
<div class="cell tx n" style="left:797px;top:366px;width:84px;height:16px;background:#ffffff;text-align:right">$ 0,00</div>
<div class="cell tx n" style="left:882px;top:366px;width:84px;height:16px;background:#ffffff;text-align:right">$ 0,00</div>
<div class="cell tx n" style="left:967px;top:366px;width:84px;height:16px;background:#ffffff;text-align:right">$ 0,00</div>
<div class="cell tx n" style="left:1052px;top:366px;width:70px;height:16px;background:#ffffff;text-align:right">$ 0,00</div>
<div class="cell tx n" style="left:1123px;top:366px;width:70px;height:16px;background:#ffffff;text-align:right">$ 0,00</div>
<div class="cell tx n" style="left:1194px;top:366px;width:84px;height:16px;background:#ffffff;text-align:right">$ 0,00</div>
<div class="cell tx n" style="left:1279px;top:366px;width:84px;height:16px;background:#ffffff;text-align:right">$ 0,00</div>
<div class="cell tx n" style="left:1364px;top:366px;width:84px;height:16px;background:#ffffff;text-align:right">$ 0,00</div>
<div class="cell tx n" style="left:1449px;top:366px;width:84px;height:16px;background:#ffffff;text-align:right">$ 0,00</div>
<div class="cell tx n" style="left:1534px;top:366px;width:83px;height:16px;background:#ffffff;text-align:right;word-spacing:0.6px">0,00 %</div>
<div class="tx b" style="left:3px;top:383px;width:141px;height:16px;text-align:left">Bebidas</div>
<div class="cell tx b" style="left:145px;top:383px;width:140px;height:16px;background:#f0e68c;text-align:left">Total</div>
<div class="cell tx b" style="left:286px;top:383px;width:85px;height:16px;background:#f0e68c;text-align:right">$ 0,00</div>
<div class="cell tx b" style="left:372px;top:383px;width:84px;height:16px;background:#f0e68c;text-align:right">$ 0,00</div>
<div class="cell tx b" style="left:457px;top:383px;width:84px;height:16px;background:#f0e68c;text-align:right">$ 0</div>
<div class="cell tx b" style="left:542px;top:383px;width:84px;height:16px;background:#f0e68c;text-align:right">$ 0,00</div>
<div class="cell tx b" style="left:627px;top:383px;width:84px;height:16px;background:#f0e68c;text-align:right;word-spacing:0.6px">0,00 %</div>
<div class="cell tx b" style="left:712px;top:383px;width:84px;height:16px;background:#f0e68c;text-align:right">$ 0,00</div>
<div class="cell tx b" style="left:797px;top:383px;width:84px;height:16px;background:#f0e68c;text-align:right">$ 0,00</div>
<div class="cell tx b" style="left:882px;top:383px;width:84px;height:16px;background:#f0e68c;text-align:right">$ 0,00</div>
<div class="cell tx b" style="left:967px;top:383px;width:84px;height:16px;background:#f0e68c;text-align:right">$ 0,00</div>
<div class="cell tx b" style="left:1052px;top:383px;width:70px;height:16px;background:#f0e68c;text-align:right">$ 0,00</div>
<div class="cell tx b" style="left:1123px;top:383px;width:70px;height:16px;background:#f0e68c;text-align:right">$ 0,00</div>
<div class="cell tx b" style="left:1194px;top:383px;width:84px;height:16px;background:#f0e68c;text-align:right">$ 0,00</div>
<div class="cell tx b" style="left:1279px;top:383px;width:84px;height:16px;background:#f0e68c;text-align:right">$ 0,00</div>
<div class="cell tx b" style="left:1364px;top:383px;width:84px;height:16px;background:#f0e68c;text-align:right">$ 0,00</div>
<div class="cell tx b" style="left:1449px;top:383px;width:84px;height:16px;background:#f0e68c;text-align:right">$ 66.803,96</div>
<div class="cell tx b" style="left:1534px;top:383px;width:83px;height:16px;background:#f0e68c;text-align:right;padding-right:0;word-spacing:0.6px;overflow:hidden">0,00 %</div>
<div class="cell tx b" style="left:145px;top:400px;width:140px;height:16px;background:#ffffff;text-align:left">Bebida Caliente</div>
<div class="cell tx n" style="left:286px;top:400px;width:85px;height:16px;background:#ffffff;text-align:right">$ 0,00</div>
<div class="cell tx n" style="left:372px;top:400px;width:84px;height:16px;background:#ffffff;text-align:right">$ 0,00</div>
<div class="cell tx n" style="left:457px;top:400px;width:84px;height:16px;background:#ffffff;text-align:right">$ 0</div>
<div class="cell tx n" style="left:542px;top:400px;width:84px;height:16px;background:#ffffff;text-align:right">$ 0,00</div>
<div class="cell tx n" style="left:627px;top:400px;width:84px;height:16px;background:#ffffff;text-align:right;word-spacing:0.6px">0,00 %</div>
<div class="cell tx n" style="left:712px;top:400px;width:84px;height:16px;background:#ffffff;text-align:right">$ 0,00</div>
<div class="cell tx n" style="left:797px;top:400px;width:84px;height:16px;background:#ffffff;text-align:right">$ 0,00</div>
<div class="cell tx n" style="left:882px;top:400px;width:84px;height:16px;background:#ffffff;text-align:right">$ 0,00</div>
<div class="cell tx n" style="left:967px;top:400px;width:84px;height:16px;background:#ffffff;text-align:right">$ 0,00</div>
<div class="cell tx n" style="left:1052px;top:400px;width:70px;height:16px;background:#ffffff;text-align:right">$ 0,00</div>
<div class="cell tx n" style="left:1123px;top:400px;width:70px;height:16px;background:#ffffff;text-align:right">$ 0,00</div>
<div class="cell tx n" style="left:1194px;top:400px;width:84px;height:16px;background:#ffffff;text-align:right">$ 0,00</div>
<div class="cell tx n" style="left:1279px;top:400px;width:84px;height:16px;background:#ffffff;text-align:right">$ 0,00</div>
<div class="cell tx n" style="left:1364px;top:400px;width:84px;height:16px;background:#ffffff;text-align:right">$ 0,00</div>
<div class="cell tx n" style="left:1449px;top:400px;width:84px;height:16px;background:#ffffff;text-align:right">$ 15.948,28</div>
<div class="cell tx n" style="left:1534px;top:400px;width:83px;height:16px;background:#ffffff;text-align:right;word-spacing:0.6px">0,00 %</div>
<div class="cell tx b" style="left:145px;top:417px;width:140px;height:16px;background:#ffffff;text-align:left">Cafés</div>
<div class="cell tx n" style="left:286px;top:417px;width:85px;height:16px;background:#ffffff;text-align:right">$ 0,00</div>
<div class="cell tx n" style="left:372px;top:417px;width:84px;height:16px;background:#ffffff;text-align:right">$ 0,00</div>
<div class="cell tx n" style="left:457px;top:417px;width:84px;height:16px;background:#ffffff;text-align:right">$ 0</div>
<div class="cell tx n" style="left:542px;top:417px;width:84px;height:16px;background:#ffffff;text-align:right">$ 0,00</div>
<div class="cell tx n" style="left:627px;top:417px;width:84px;height:16px;background:#ffffff;text-align:right;word-spacing:0.6px">0,00 %</div>
<div class="cell tx n" style="left:712px;top:417px;width:84px;height:16px;background:#ffffff;text-align:right">$ 0,00</div>
<div class="cell tx n" style="left:797px;top:417px;width:84px;height:16px;background:#ffffff;text-align:right">$ 0,00</div>
<div class="cell tx n" style="left:882px;top:417px;width:84px;height:16px;background:#ffffff;text-align:right">$ 0,00</div>
<div class="cell tx n" style="left:967px;top:417px;width:84px;height:16px;background:#ffffff;text-align:right">$ 0,00</div>
<div class="cell tx n" style="left:1052px;top:417px;width:70px;height:16px;background:#ffffff;text-align:right">$ 0,00</div>
<div class="cell tx n" style="left:1123px;top:417px;width:70px;height:16px;background:#ffffff;text-align:right">$ 0,00</div>
<div class="cell tx n" style="left:1194px;top:417px;width:84px;height:16px;background:#ffffff;text-align:right">$ 0,00</div>
<div class="cell tx n" style="left:1279px;top:417px;width:84px;height:16px;background:#ffffff;text-align:right">$ 0,00</div>
<div class="cell tx n" style="left:1364px;top:417px;width:84px;height:16px;background:#ffffff;text-align:right">$ 0,00</div>
<div class="cell tx n" style="left:1449px;top:417px;width:84px;height:16px;background:#ffffff;text-align:right">$ 3.448,28</div>
<div class="cell tx n" style="left:1534px;top:417px;width:83px;height:16px;background:#ffffff;text-align:right;word-spacing:0.6px">0,00 %</div>
<div class="cell tx b" style="left:145px;top:434px;width:140px;height:16px;background:#ffffff;text-align:left">Cervezas</div>
<div class="cell tx n" style="left:286px;top:434px;width:85px;height:16px;background:#ffffff;text-align:right">$ 0,00</div>
<div class="cell tx n" style="left:372px;top:434px;width:84px;height:16px;background:#ffffff;text-align:right">$ 0,00</div>
<div class="cell tx n" style="left:457px;top:434px;width:84px;height:16px;background:#ffffff;text-align:right">$ 0</div>
<div class="cell tx n" style="left:542px;top:434px;width:84px;height:16px;background:#ffffff;text-align:right">$ 0,00</div>
<div class="cell tx n" style="left:627px;top:434px;width:84px;height:16px;background:#ffffff;text-align:right;word-spacing:0.6px">0,00 %</div>
<div class="cell tx n" style="left:712px;top:434px;width:84px;height:16px;background:#ffffff;text-align:right">$ 0,00</div>
<div class="cell tx n" style="left:797px;top:434px;width:84px;height:16px;background:#ffffff;text-align:right">$ 0,00</div>
<div class="cell tx n" style="left:882px;top:434px;width:84px;height:16px;background:#ffffff;text-align:right">$ 0,00</div>
<div class="cell tx n" style="left:967px;top:434px;width:84px;height:16px;background:#ffffff;text-align:right">$ 0,00</div>
<div class="cell tx n" style="left:1052px;top:434px;width:70px;height:16px;background:#ffffff;text-align:right">$ 0,00</div>
<div class="cell tx n" style="left:1123px;top:434px;width:70px;height:16px;background:#ffffff;text-align:right">$ 0,00</div>
<div class="cell tx n" style="left:1194px;top:434px;width:84px;height:16px;background:#ffffff;text-align:right">$ 0,00</div>
<div class="cell tx n" style="left:1279px;top:434px;width:84px;height:16px;background:#ffffff;text-align:right">$ 0,00</div>
<div class="cell tx n" style="left:1364px;top:434px;width:84px;height:16px;background:#ffffff;text-align:right">$ 0,00</div>
<div class="cell tx n" style="left:1449px;top:434px;width:84px;height:16px;background:#ffffff;text-align:right">$ 0,00</div>
<div class="cell tx n" style="left:1534px;top:434px;width:83px;height:16px;background:#ffffff;text-align:right;word-spacing:0.6px">0,00 %</div>
<div class="cell tx b" style="left:145px;top:451px;width:140px;height:16px;background:#ffffff;text-align:left">Gaseosas</div>
<div class="cell tx n" style="left:286px;top:451px;width:85px;height:16px;background:#ffffff;text-align:right">$ 0,00</div>
<div class="cell tx n" style="left:372px;top:451px;width:84px;height:16px;background:#ffffff;text-align:right">$ 0,00</div>
<div class="cell tx n" style="left:457px;top:451px;width:84px;height:16px;background:#ffffff;text-align:right">$ 0</div>
<div class="cell tx n" style="left:542px;top:451px;width:84px;height:16px;background:#ffffff;text-align:right">$ 0,00</div>
<div class="cell tx n" style="left:627px;top:451px;width:84px;height:16px;background:#ffffff;text-align:right;word-spacing:0.6px">0,00 %</div>
<div class="cell tx n" style="left:712px;top:451px;width:84px;height:16px;background:#ffffff;text-align:right">$ 0,00</div>
<div class="cell tx n" style="left:797px;top:451px;width:84px;height:16px;background:#ffffff;text-align:right">$ 0,00</div>
<div class="cell tx n" style="left:882px;top:451px;width:84px;height:16px;background:#ffffff;text-align:right">$ 0,00</div>
<div class="cell tx n" style="left:967px;top:451px;width:84px;height:16px;background:#ffffff;text-align:right">$ 0,00</div>
<div class="cell tx n" style="left:1052px;top:451px;width:70px;height:16px;background:#ffffff;text-align:right">$ 0,00</div>
<div class="cell tx n" style="left:1123px;top:451px;width:70px;height:16px;background:#ffffff;text-align:right">$ 0,00</div>
<div class="cell tx n" style="left:1194px;top:451px;width:84px;height:16px;background:#ffffff;text-align:right">$ 0,00</div>
<div class="cell tx n" style="left:1279px;top:451px;width:84px;height:16px;background:#ffffff;text-align:right">$ 0,00</div>
<div class="cell tx n" style="left:1364px;top:451px;width:84px;height:16px;background:#ffffff;text-align:right">$ 0,00</div>
<div class="cell tx n" style="left:1449px;top:451px;width:84px;height:16px;background:#ffffff;text-align:right">$ 28.981,48</div>
<div class="cell tx n" style="left:1534px;top:451px;width:83px;height:16px;background:#ffffff;text-align:right;word-spacing:0.6px">0,00 %</div>
<div class="cell tx b" style="left:145px;top:468px;width:140px;height:16px;background:#ffffff;text-align:left">Gaseosas y agua</div>
<div class="cell tx n" style="left:286px;top:468px;width:85px;height:16px;background:#ffffff;text-align:right">$ 0,00</div>
<div class="cell tx n" style="left:372px;top:468px;width:84px;height:16px;background:#ffffff;text-align:right">$ 0,00</div>
<div class="cell tx n" style="left:457px;top:468px;width:84px;height:16px;background:#ffffff;text-align:right">$ 0</div>
<div class="cell tx n" style="left:542px;top:468px;width:84px;height:16px;background:#ffffff;text-align:right">$ 0,00</div>
<div class="cell tx n" style="left:627px;top:468px;width:84px;height:16px;background:#ffffff;text-align:right;word-spacing:0.6px">0,00 %</div>
<div class="cell tx n" style="left:712px;top:468px;width:84px;height:16px;background:#ffffff;text-align:right">$ 0,00</div>
<div class="cell tx n" style="left:797px;top:468px;width:84px;height:16px;background:#ffffff;text-align:right">$ 0,00</div>
<div class="cell tx n" style="left:882px;top:468px;width:84px;height:16px;background:#ffffff;text-align:right">$ 0,00</div>
<div class="cell tx n" style="left:967px;top:468px;width:84px;height:16px;background:#ffffff;text-align:right">$ 0,00</div>
<div class="cell tx n" style="left:1052px;top:468px;width:70px;height:16px;background:#ffffff;text-align:right">$ 0,00</div>
<div class="cell tx n" style="left:1123px;top:468px;width:70px;height:16px;background:#ffffff;text-align:right">$ 0,00</div>
<div class="cell tx n" style="left:1194px;top:468px;width:84px;height:16px;background:#ffffff;text-align:right">$ 0,00</div>
<div class="cell tx n" style="left:1279px;top:468px;width:84px;height:16px;background:#ffffff;text-align:right">$ 0,00</div>
<div class="cell tx n" style="left:1364px;top:468px;width:84px;height:16px;background:#ffffff;text-align:right">$ 0,00</div>
<div class="cell tx n" style="left:1449px;top:468px;width:84px;height:16px;background:#ffffff;text-align:right">$ 8.148,15</div>
<div class="cell tx n" style="left:1534px;top:468px;width:83px;height:16px;background:#ffffff;text-align:right;word-spacing:0.6px">0,00 %</div>
<div class="cell tx b" style="left:145px;top:485px;width:140px;height:16px;background:#ffffff;text-align:left">Jugos</div>
<div class="cell tx n" style="left:286px;top:485px;width:85px;height:16px;background:#ffffff;text-align:right">$ 0,00</div>
<div class="cell tx n" style="left:372px;top:485px;width:84px;height:16px;background:#ffffff;text-align:right">$ 0,00</div>
<div class="cell tx n" style="left:457px;top:485px;width:84px;height:16px;background:#ffffff;text-align:right">$ 0</div>
<div class="cell tx n" style="left:542px;top:485px;width:84px;height:16px;background:#ffffff;text-align:right">$ 0,00</div>
<div class="cell tx n" style="left:627px;top:485px;width:84px;height:16px;background:#ffffff;text-align:right;word-spacing:0.6px">0,00 %</div>
<div class="cell tx n" style="left:712px;top:485px;width:84px;height:16px;background:#ffffff;text-align:right">$ 0,00</div>
<div class="cell tx n" style="left:797px;top:485px;width:84px;height:16px;background:#ffffff;text-align:right">$ 0,00</div>
<div class="cell tx n" style="left:882px;top:485px;width:84px;height:16px;background:#ffffff;text-align:right">$ 0,00</div>
<div class="cell tx n" style="left:967px;top:485px;width:84px;height:16px;background:#ffffff;text-align:right">$ 0,00</div>
<div class="cell tx n" style="left:1052px;top:485px;width:70px;height:16px;background:#ffffff;text-align:right">$ 0,00</div>
<div class="cell tx n" style="left:1123px;top:485px;width:70px;height:16px;background:#ffffff;text-align:right">$ 0,00</div>
<div class="cell tx n" style="left:1194px;top:485px;width:84px;height:16px;background:#ffffff;text-align:right">$ 0,00</div>
<div class="cell tx n" style="left:1279px;top:485px;width:84px;height:16px;background:#ffffff;text-align:right">$ 0,00</div>
<div class="cell tx n" style="left:1364px;top:485px;width:84px;height:16px;background:#ffffff;text-align:right">$ 0,00</div>
<div class="cell tx n" style="left:1449px;top:485px;width:84px;height:16px;background:#ffffff;text-align:right">$ 5.277,78</div>
<div class="cell tx n" style="left:1534px;top:485px;width:83px;height:16px;background:#ffffff;text-align:right;word-spacing:0.6px">0,00 %</div>
<div class="cell tx b" style="left:145px;top:502px;width:140px;height:16px;background:#ffffff;text-align:left">Jugos Naturales</div>
<div class="cell tx n" style="left:286px;top:502px;width:85px;height:16px;background:#ffffff;text-align:right">$ 0,00</div>
<div class="cell tx n" style="left:372px;top:502px;width:84px;height:16px;background:#ffffff;text-align:right">$ 0,00</div>
<div class="cell tx n" style="left:457px;top:502px;width:84px;height:16px;background:#ffffff;text-align:right">$ 0</div>
<div class="cell tx n" style="left:542px;top:502px;width:84px;height:16px;background:#ffffff;text-align:right">$ 0,00</div>
<div class="cell tx n" style="left:627px;top:502px;width:84px;height:16px;background:#ffffff;text-align:right;word-spacing:0.6px">0,00 %</div>
<div class="cell tx n" style="left:712px;top:502px;width:84px;height:16px;background:#ffffff;text-align:right">$ 0,00</div>
<div class="cell tx n" style="left:797px;top:502px;width:84px;height:16px;background:#ffffff;text-align:right">$ 0,00</div>
<div class="cell tx n" style="left:882px;top:502px;width:84px;height:16px;background:#ffffff;text-align:right">$ 0,00</div>
<div class="cell tx n" style="left:967px;top:502px;width:84px;height:16px;background:#ffffff;text-align:right">$ 0,00</div>
<div class="cell tx n" style="left:1052px;top:502px;width:70px;height:16px;background:#ffffff;text-align:right">$ 0,00</div>
<div class="cell tx n" style="left:1123px;top:502px;width:70px;height:16px;background:#ffffff;text-align:right">$ 0,00</div>
<div class="cell tx n" style="left:1194px;top:502px;width:84px;height:16px;background:#ffffff;text-align:right">$ 0,00</div>
<div class="cell tx n" style="left:1279px;top:502px;width:84px;height:16px;background:#ffffff;text-align:right">$ 0,00</div>
<div class="cell tx n" style="left:1364px;top:502px;width:84px;height:16px;background:#ffffff;text-align:right">$ 0,00</div>
<div class="cell tx n" style="left:1449px;top:502px;width:84px;height:16px;background:#ffffff;text-align:right">$ 5.000,00</div>
<div class="cell tx n" style="left:1534px;top:502px;width:83px;height:16px;background:#ffffff;text-align:right;word-spacing:0.6px">0,00 %</div>
<div class="tx b" style="left:3px;top:519px;width:141px;height:16px;text-align:left">Bebidas3</div>
<div class="cell tx b" style="left:145px;top:519px;width:140px;height:16px;background:#f0e68c;text-align:left">Total</div>
<div class="cell tx b" style="left:286px;top:519px;width:85px;height:16px;background:#f0e68c;text-align:right">$ 0,00</div>
<div class="cell tx b" style="left:372px;top:519px;width:84px;height:16px;background:#f0e68c;text-align:right">$ 0,00</div>
<div class="cell tx b" style="left:457px;top:519px;width:84px;height:16px;background:#f0e68c;text-align:right">$ 0</div>
<div class="cell tx b" style="left:542px;top:519px;width:84px;height:16px;background:#f0e68c;text-align:right">$ 0,00</div>
<div class="cell tx b" style="left:627px;top:519px;width:84px;height:16px;background:#f0e68c;text-align:right;word-spacing:0.6px">0,00 %</div>
<div class="cell tx b" style="left:712px;top:519px;width:84px;height:16px;background:#f0e68c;text-align:right">$ 0,00</div>
<div class="cell tx b" style="left:797px;top:519px;width:84px;height:16px;background:#f0e68c;text-align:right">$ 0,00</div>
<div class="cell tx b" style="left:882px;top:519px;width:84px;height:16px;background:#f0e68c;text-align:right">$ 0,00</div>
<div class="cell tx b" style="left:967px;top:519px;width:84px;height:16px;background:#f0e68c;text-align:right">$ 0,00</div>
<div class="cell tx b" style="left:1052px;top:519px;width:70px;height:16px;background:#f0e68c;text-align:right">$ 0,00</div>
<div class="cell tx b" style="left:1123px;top:519px;width:70px;height:16px;background:#f0e68c;text-align:right">$ 0,00</div>
<div class="cell tx b" style="left:1194px;top:519px;width:84px;height:16px;background:#f0e68c;text-align:right">$ 0,00</div>
<div class="cell tx b" style="left:1279px;top:519px;width:84px;height:16px;background:#f0e68c;text-align:right">$ 0,00</div>
<div class="cell tx b" style="left:1364px;top:519px;width:84px;height:16px;background:#f0e68c;text-align:right">$ 0,00</div>
<div class="cell tx b" style="left:1449px;top:519px;width:84px;height:16px;background:#f0e68c;text-align:right">$ 0,00</div>
<div class="cell tx b" style="left:1534px;top:519px;width:83px;height:16px;background:#f0e68c;text-align:right;padding-right:0;word-spacing:0.6px;overflow:hidden">0,00 %</div>
<div class="cell tx b" style="left:145px;top:536px;width:140px;height:16px;background:#ffffff;text-align:left">Platos fuertes</div>
<div class="cell tx n" style="left:286px;top:536px;width:85px;height:16px;background:#ffffff;text-align:right">$ 0,00</div>
<div class="cell tx n" style="left:372px;top:536px;width:84px;height:16px;background:#ffffff;text-align:right">$ 0,00</div>
<div class="cell tx n" style="left:457px;top:536px;width:84px;height:16px;background:#ffffff;text-align:right">$ 0</div>
<div class="cell tx n" style="left:542px;top:536px;width:84px;height:16px;background:#ffffff;text-align:right">$ 0,00</div>
<div class="cell tx n" style="left:627px;top:536px;width:84px;height:16px;background:#ffffff;text-align:right;word-spacing:0.6px">0,00 %</div>
<div class="cell tx n" style="left:712px;top:536px;width:84px;height:16px;background:#ffffff;text-align:right">$ 0,00</div>
<div class="cell tx n" style="left:797px;top:536px;width:84px;height:16px;background:#ffffff;text-align:right">$ 0,00</div>
<div class="cell tx n" style="left:882px;top:536px;width:84px;height:16px;background:#ffffff;text-align:right">$ 0,00</div>
<div class="cell tx n" style="left:967px;top:536px;width:84px;height:16px;background:#ffffff;text-align:right">$ 0,00</div>
<div class="cell tx n" style="left:1052px;top:536px;width:70px;height:16px;background:#ffffff;text-align:right">$ 0,00</div>
<div class="cell tx n" style="left:1123px;top:536px;width:70px;height:16px;background:#ffffff;text-align:right">$ 0,00</div>
<div class="cell tx n" style="left:1194px;top:536px;width:84px;height:16px;background:#ffffff;text-align:right">$ 0,00</div>
<div class="cell tx n" style="left:1279px;top:536px;width:84px;height:16px;background:#ffffff;text-align:right">$ 0,00</div>
<div class="cell tx n" style="left:1364px;top:536px;width:84px;height:16px;background:#ffffff;text-align:right">$ 0,00</div>
<div class="cell tx n" style="left:1449px;top:536px;width:84px;height:16px;background:#ffffff;text-align:right">$ 0,00</div>
<div class="cell tx n" style="left:1534px;top:536px;width:83px;height:16px;background:#ffffff;text-align:right;word-spacing:0.6px">0,00 %</div>
<div class="tx b" style="left:3px;top:553px;width:141px;height:16px;text-align:left">DESAYUNO</div>
<div class="cell tx b" style="left:145px;top:553px;width:140px;height:16px;background:#f0e68c;text-align:left">Total</div>
<div class="cell tx b" style="left:286px;top:553px;width:85px;height:16px;background:#f0e68c;text-align:right">$ 0,00</div>
<div class="cell tx b" style="left:372px;top:553px;width:84px;height:16px;background:#f0e68c;text-align:right">$ 0,00</div>
<div class="cell tx b" style="left:457px;top:553px;width:84px;height:16px;background:#f0e68c;text-align:right">$ 0</div>
<div class="cell tx b" style="left:542px;top:553px;width:84px;height:16px;background:#f0e68c;text-align:right">$ 0,00</div>
<div class="cell tx b" style="left:627px;top:553px;width:84px;height:16px;background:#f0e68c;text-align:right;word-spacing:0.6px">0,00 %</div>
<div class="cell tx b" style="left:712px;top:553px;width:84px;height:16px;background:#f0e68c;text-align:right">$ 0,00</div>
<div class="cell tx b" style="left:797px;top:553px;width:84px;height:16px;background:#f0e68c;text-align:right">$ 0,00</div>
<div class="cell tx b" style="left:882px;top:553px;width:84px;height:16px;background:#f0e68c;text-align:right">$ 0,00</div>
<div class="cell tx b" style="left:967px;top:553px;width:84px;height:16px;background:#f0e68c;text-align:right">$ 0,00</div>
<div class="cell tx b" style="left:1052px;top:553px;width:70px;height:16px;background:#f0e68c;text-align:right">$ 0,00</div>
<div class="cell tx b" style="left:1123px;top:553px;width:70px;height:16px;background:#f0e68c;text-align:right">$ 0,00</div>
<div class="cell tx b" style="left:1194px;top:553px;width:84px;height:16px;background:#f0e68c;text-align:right">$ 0,00</div>
<div class="cell tx b" style="left:1279px;top:553px;width:84px;height:16px;background:#f0e68c;text-align:right">$ 0,00</div>
<div class="cell tx b" style="left:1364px;top:553px;width:84px;height:16px;background:#f0e68c;text-align:right">$ 0,00</div>
<div class="cell tx b" style="left:1449px;top:553px;width:84px;height:16px;background:#f0e68c;text-align:right">$ 9.259,26</div>
<div class="cell tx b" style="left:1534px;top:553px;width:83px;height:16px;background:#f0e68c;text-align:right;padding-right:0;word-spacing:0.6px;overflow:hidden">0,00 %</div>
<div class="cell tx b" style="left:145px;top:570px;width:140px;height:16px;background:#ffffff;text-align:left">Especialidades</div>
<div class="cell tx n" style="left:286px;top:570px;width:85px;height:16px;background:#ffffff;text-align:right">$ 0,00</div>
<div class="cell tx n" style="left:372px;top:570px;width:84px;height:16px;background:#ffffff;text-align:right">$ 0,00</div>
<div class="cell tx n" style="left:457px;top:570px;width:84px;height:16px;background:#ffffff;text-align:right">$ 0</div>
<div class="cell tx n" style="left:542px;top:570px;width:84px;height:16px;background:#ffffff;text-align:right">$ 0,00</div>
<div class="cell tx n" style="left:627px;top:570px;width:84px;height:16px;background:#ffffff;text-align:right;word-spacing:0.6px">0,00 %</div>
<div class="cell tx n" style="left:712px;top:570px;width:84px;height:16px;background:#ffffff;text-align:right">$ 0,00</div>
<div class="cell tx n" style="left:797px;top:570px;width:84px;height:16px;background:#ffffff;text-align:right">$ 0,00</div>
<div class="cell tx n" style="left:882px;top:570px;width:84px;height:16px;background:#ffffff;text-align:right">$ 0,00</div>
<div class="cell tx n" style="left:967px;top:570px;width:84px;height:16px;background:#ffffff;text-align:right">$ 0,00</div>
<div class="cell tx n" style="left:1052px;top:570px;width:70px;height:16px;background:#ffffff;text-align:right">$ 0,00</div>
<div class="cell tx n" style="left:1123px;top:570px;width:70px;height:16px;background:#ffffff;text-align:right">$ 0,00</div>
<div class="cell tx n" style="left:1194px;top:570px;width:84px;height:16px;background:#ffffff;text-align:right">$ 0,00</div>
<div class="cell tx n" style="left:1279px;top:570px;width:84px;height:16px;background:#ffffff;text-align:right">$ 0,00</div>
<div class="cell tx n" style="left:1364px;top:570px;width:84px;height:16px;background:#ffffff;text-align:right">$ 0,00</div>
<div class="cell tx n" style="left:1449px;top:570px;width:84px;height:16px;background:#ffffff;text-align:right">$ 9.259,26</div>
<div class="cell tx n" style="left:1534px;top:570px;width:83px;height:16px;background:#ffffff;text-align:right;word-spacing:0.6px">0,00 %</div>
<div class="tx b" style="left:3px;top:587px;width:141px;height:16px;text-align:left">Insumos</div>
<div class="cell tx b" style="left:145px;top:587px;width:140px;height:16px;background:#f0e68c;text-align:left">Total</div>
<div class="cell tx b" style="left:286px;top:587px;width:85px;height:16px;background:#f0e68c;text-align:right">$ 9.163,00</div>
<div class="cell tx b" style="left:372px;top:587px;width:84px;height:16px;background:#f0e68c;text-align:right">$ 41.650,00</div>
<div class="cell tx b" style="left:457px;top:587px;width:84px;height:16px;background:#f0e68c;text-align:right">$ 0</div>
<div class="cell tx b" style="left:542px;top:587px;width:84px;height:16px;background:#f0e68c;text-align:right">-$ 166,60</div>
<div class="cell tx b" style="left:627px;top:587px;width:84px;height:16px;background:#f0e68c;text-align:right;word-spacing:0.6px">10,00 %</div>
<div class="cell tx b" style="left:712px;top:587px;width:84px;height:16px;background:#f0e68c;text-align:right">$ 0,00</div>
<div class="cell tx b" style="left:797px;top:587px;width:84px;height:16px;background:#f0e68c;text-align:right">-$ 999,60</div>
<div class="cell tx b" style="left:882px;top:587px;width:84px;height:16px;background:#f0e68c;text-align:right">$ 0,00</div>
<div class="cell tx b" style="left:967px;top:587px;width:84px;height:16px;background:#f0e68c;text-align:right">-$ 26.239,50</div>
<div class="cell tx b" style="left:1052px;top:587px;width:70px;height:16px;background:#f0e68c;text-align:right">$ 0,00</div>
<div class="cell tx b" style="left:1123px;top:587px;width:70px;height:16px;background:#f0e68c;text-align:right">$ 0,00</div>
<div class="cell tx b" style="left:1194px;top:587px;width:84px;height:16px;background:#f0e68c;text-align:right">$ 21.741,30</div>
<div class="cell tx b" style="left:1279px;top:587px;width:84px;height:16px;background:#f0e68c;text-align:right">$ 1.666,00</div>
<div class="cell tx b" style="left:1364px;top:587px;width:84px;height:16px;background:#f0e68c;text-align:right">-$ 1.666,00</div>
<div class="cell tx b" style="left:1449px;top:587px;width:84px;height:16px;background:#f0e68c;text-align:right">$ 38.407,41</div>
<div class="cell tx b" style="left:1534px;top:587px;width:83px;height:16px;background:#f0e68c;text-align:right;padding-right:0;word-spacing:0.6px;overflow:hidden">4,34 %</div>
<div class="cell tx b" style="left:145px;top:604px;width:140px;height:16px;background:#ffffff;text-align:left">Abarrotes</div>
<div class="cell tx n" style="left:286px;top:604px;width:85px;height:16px;background:#ffffff;text-align:right">$ 9.163,00</div>
<div class="cell tx n" style="left:372px;top:604px;width:84px;height:16px;background:#ffffff;text-align:right">$ 0,00</div>
<div class="cell tx n" style="left:457px;top:604px;width:84px;height:16px;background:#ffffff;text-align:right">$ 0</div>
<div class="cell tx n" style="left:542px;top:604px;width:84px;height:16px;background:#ffffff;text-align:right">$ 0,00</div>
<div class="cell tx n" style="left:627px;top:604px;width:84px;height:16px;background:#ffffff;text-align:right;word-spacing:0.6px">0,00 %</div>
<div class="cell tx n" style="left:712px;top:604px;width:84px;height:16px;background:#ffffff;text-align:right">$ 0,00</div>
<div class="cell tx n" style="left:797px;top:604px;width:84px;height:16px;background:#ffffff;text-align:right">$ 0,00</div>
<div class="cell tx n" style="left:882px;top:604px;width:84px;height:16px;background:#ffffff;text-align:right">$ 0,00</div>
<div class="cell tx n" style="left:967px;top:604px;width:84px;height:16px;background:#ffffff;text-align:right">$ 0,00</div>
<div class="cell tx n" style="left:1052px;top:604px;width:70px;height:16px;background:#ffffff;text-align:right">$ 0,00</div>
<div class="cell tx n" style="left:1123px;top:604px;width:70px;height:16px;background:#ffffff;text-align:right">$ 0,00</div>
<div class="cell tx n" style="left:1194px;top:604px;width:84px;height:16px;background:#ffffff;text-align:right">$ 9.163,00</div>
<div class="cell tx n" style="left:1279px;top:604px;width:84px;height:16px;background:#ffffff;text-align:right">$ 0,00</div>
<div class="cell tx n" style="left:1364px;top:604px;width:84px;height:16px;background:#ffffff;text-align:right">$ 0,00</div>
<div class="cell tx n" style="left:1449px;top:604px;width:84px;height:16px;background:#ffffff;text-align:right">$ 0,00</div>
<div class="cell tx n" style="left:1534px;top:604px;width:83px;height:16px;background:#ffffff;text-align:right;word-spacing:0.6px">0,00 %</div>
<div class="cell tx b" style="left:145px;top:621px;width:140px;height:16px;background:#ffffff;text-align:left">adiciones</div>
<div class="cell tx n" style="left:286px;top:621px;width:85px;height:16px;background:#ffffff;text-align:right">$ 0,00</div>
<div class="cell tx n" style="left:372px;top:621px;width:84px;height:16px;background:#ffffff;text-align:right">$ 0,00</div>
<div class="cell tx n" style="left:457px;top:621px;width:84px;height:16px;background:#ffffff;text-align:right">$ 0</div>
<div class="cell tx n" style="left:542px;top:621px;width:84px;height:16px;background:#ffffff;text-align:right">$ 0,00</div>
<div class="cell tx n" style="left:627px;top:621px;width:84px;height:16px;background:#ffffff;text-align:right;word-spacing:0.6px">0,00 %</div>
<div class="cell tx n" style="left:712px;top:621px;width:84px;height:16px;background:#ffffff;text-align:right">$ 0,00</div>
<div class="cell tx n" style="left:797px;top:621px;width:84px;height:16px;background:#ffffff;text-align:right">$ 0,00</div>
<div class="cell tx n" style="left:882px;top:621px;width:84px;height:16px;background:#ffffff;text-align:right">$ 0,00</div>
<div class="cell tx n" style="left:967px;top:621px;width:84px;height:16px;background:#ffffff;text-align:right">$ 0,00</div>
<div class="cell tx n" style="left:1052px;top:621px;width:70px;height:16px;background:#ffffff;text-align:right">$ 0,00</div>
<div class="cell tx n" style="left:1123px;top:621px;width:70px;height:16px;background:#ffffff;text-align:right">$ 0,00</div>
<div class="cell tx n" style="left:1194px;top:621px;width:84px;height:16px;background:#ffffff;text-align:right">$ 0,00</div>
<div class="cell tx n" style="left:1279px;top:621px;width:84px;height:16px;background:#ffffff;text-align:right">$ 0,00</div>
<div class="cell tx n" style="left:1364px;top:621px;width:84px;height:16px;background:#ffffff;text-align:right">$ 0,00</div>
<div class="cell tx n" style="left:1449px;top:621px;width:84px;height:16px;background:#ffffff;text-align:right">$ 15.259,26</div>
<div class="cell tx n" style="left:1534px;top:621px;width:83px;height:16px;background:#ffffff;text-align:right;word-spacing:0.6px">0,00 %</div>
<div class="cell tx b" style="left:145px;top:638px;width:140px;height:16px;background:#ffffff;text-align:left">Carnes</div>
<div class="cell tx n" style="left:286px;top:638px;width:85px;height:16px;background:#ffffff;text-align:right">$ 0,00</div>
<div class="cell tx n" style="left:372px;top:638px;width:84px;height:16px;background:#ffffff;text-align:right">$ 0,00</div>
<div class="cell tx n" style="left:457px;top:638px;width:84px;height:16px;background:#ffffff;text-align:right">$ 0</div>
<div class="cell tx n" style="left:542px;top:638px;width:84px;height:16px;background:#ffffff;text-align:right">$ 0,00</div>
<div class="cell tx n" style="left:627px;top:638px;width:84px;height:16px;background:#ffffff;text-align:right;word-spacing:0.6px">0,00 %</div>
<div class="cell tx n" style="left:712px;top:638px;width:84px;height:16px;background:#ffffff;text-align:right">$ 0,00</div>
<div class="cell tx n" style="left:797px;top:638px;width:84px;height:16px;background:#ffffff;text-align:right">$ 0,00</div>
<div class="cell tx n" style="left:882px;top:638px;width:84px;height:16px;background:#ffffff;text-align:right">$ 0,00</div>
<div class="cell tx n" style="left:967px;top:638px;width:84px;height:16px;background:#ffffff;text-align:right">$ 0,00</div>
<div class="cell tx n" style="left:1052px;top:638px;width:70px;height:16px;background:#ffffff;text-align:right">$ 0,00</div>
<div class="cell tx n" style="left:1123px;top:638px;width:70px;height:16px;background:#ffffff;text-align:right">$ 0,00</div>
<div class="cell tx n" style="left:1194px;top:638px;width:84px;height:16px;background:#ffffff;text-align:right">$ 0,00</div>
<div class="cell tx n" style="left:1279px;top:638px;width:84px;height:16px;background:#ffffff;text-align:right">$ 0,00</div>
<div class="cell tx n" style="left:1364px;top:638px;width:84px;height:16px;background:#ffffff;text-align:right">$ 0,00</div>
<div class="cell tx n" style="left:1449px;top:638px;width:84px;height:16px;background:#ffffff;text-align:right">$ 18.518,52</div>
<div class="cell tx n" style="left:1534px;top:638px;width:83px;height:16px;background:#ffffff;text-align:right;word-spacing:0.6px">0,00 %</div>
<div class="cell tx b" style="left:145px;top:655px;width:140px;height:16px;background:#ffffff;text-align:left">Cárnicos</div>
<div class="cell tx n" style="left:286px;top:655px;width:85px;height:16px;background:#ffffff;text-align:right">$ 0,00</div>
<div class="cell tx n" style="left:372px;top:655px;width:84px;height:16px;background:#ffffff;text-align:right">$ 0,00</div>
<div class="cell tx n" style="left:457px;top:655px;width:84px;height:16px;background:#ffffff;text-align:right">$ 0</div>
<div class="cell tx n" style="left:542px;top:655px;width:84px;height:16px;background:#ffffff;text-align:right">$ 0,00</div>
<div class="cell tx n" style="left:627px;top:655px;width:84px;height:16px;background:#ffffff;text-align:right;word-spacing:0.6px">0,00 %</div>
<div class="cell tx n" style="left:712px;top:655px;width:84px;height:16px;background:#ffffff;text-align:right">$ 0,00</div>
<div class="cell tx n" style="left:797px;top:655px;width:84px;height:16px;background:#ffffff;text-align:right">$ 0,00</div>
<div class="cell tx n" style="left:882px;top:655px;width:84px;height:16px;background:#ffffff;text-align:right">$ 0,00</div>
<div class="cell tx n" style="left:967px;top:655px;width:84px;height:16px;background:#ffffff;text-align:right">$ 0,00</div>
<div class="cell tx n" style="left:1052px;top:655px;width:70px;height:16px;background:#ffffff;text-align:right">$ 0,00</div>
<div class="cell tx n" style="left:1123px;top:655px;width:70px;height:16px;background:#ffffff;text-align:right">$ 0,00</div>
<div class="cell tx n" style="left:1194px;top:655px;width:84px;height:16px;background:#ffffff;text-align:right">$ 0,00</div>
<div class="cell tx n" style="left:1279px;top:655px;width:84px;height:16px;background:#ffffff;text-align:right">$ 0,00</div>
<div class="cell tx n" style="left:1364px;top:655px;width:84px;height:16px;background:#ffffff;text-align:right">$ 0,00</div>
<div class="cell tx n" style="left:1449px;top:655px;width:84px;height:16px;background:#ffffff;text-align:right">$ 0,00</div>
<div class="cell tx n" style="left:1534px;top:655px;width:83px;height:16px;background:#ffffff;text-align:right;word-spacing:0.6px">0,00 %</div>
<div class="cell tx b" style="left:145px;top:672px;width:140px;height:16px;background:#ffffff;text-align:left">Cereales</div>
<div class="cell tx n" style="left:286px;top:672px;width:85px;height:16px;background:#ffffff;text-align:right">$ 0,00</div>
<div class="cell tx n" style="left:372px;top:672px;width:84px;height:16px;background:#ffffff;text-align:right">$ 0,00</div>
<div class="cell tx n" style="left:457px;top:672px;width:84px;height:16px;background:#ffffff;text-align:right">$ 0</div>
<div class="cell tx n" style="left:542px;top:672px;width:84px;height:16px;background:#ffffff;text-align:right">$ 0,00</div>
<div class="cell tx n" style="left:627px;top:672px;width:84px;height:16px;background:#ffffff;text-align:right;word-spacing:0.6px">0,00 %</div>
<div class="cell tx n" style="left:712px;top:672px;width:84px;height:16px;background:#ffffff;text-align:right">$ 0,00</div>
<div class="cell tx n" style="left:797px;top:672px;width:84px;height:16px;background:#ffffff;text-align:right">$ 0,00</div>
<div class="cell tx n" style="left:882px;top:672px;width:84px;height:16px;background:#ffffff;text-align:right">$ 0,00</div>
<div class="cell tx n" style="left:967px;top:672px;width:84px;height:16px;background:#ffffff;text-align:right">$ 0,00</div>
<div class="cell tx n" style="left:1052px;top:672px;width:70px;height:16px;background:#ffffff;text-align:right">$ 0,00</div>
<div class="cell tx n" style="left:1123px;top:672px;width:70px;height:16px;background:#ffffff;text-align:right">$ 0,00</div>
<div class="cell tx n" style="left:1194px;top:672px;width:84px;height:16px;background:#ffffff;text-align:right">$ 0,00</div>
<div class="cell tx n" style="left:1279px;top:672px;width:84px;height:16px;background:#ffffff;text-align:right">$ 0,00</div>
<div class="cell tx n" style="left:1364px;top:672px;width:84px;height:16px;background:#ffffff;text-align:right">$ 0,00</div>
<div class="cell tx n" style="left:1449px;top:672px;width:84px;height:16px;background:#ffffff;text-align:right">$ 0,00</div>
<div class="cell tx n" style="left:1534px;top:672px;width:83px;height:16px;background:#ffffff;text-align:right;word-spacing:0.6px">0,00 %</div>
<div class="cell tx b" style="left:145px;top:689px;width:140px;height:16px;background:#ffffff;text-align:left">Condimentos</div>
<div class="cell tx n" style="left:286px;top:689px;width:85px;height:16px;background:#ffffff;text-align:right">$ 0,00</div>
<div class="cell tx n" style="left:372px;top:689px;width:84px;height:16px;background:#ffffff;text-align:right">$ 0,00</div>
<div class="cell tx n" style="left:457px;top:689px;width:84px;height:16px;background:#ffffff;text-align:right">$ 0</div>
<div class="cell tx n" style="left:542px;top:689px;width:84px;height:16px;background:#ffffff;text-align:right">$ 0,00</div>
<div class="cell tx n" style="left:627px;top:689px;width:84px;height:16px;background:#ffffff;text-align:right;word-spacing:0.6px">0,00 %</div>
<div class="cell tx n" style="left:712px;top:689px;width:84px;height:16px;background:#ffffff;text-align:right">$ 0,00</div>
<div class="cell tx n" style="left:797px;top:689px;width:84px;height:16px;background:#ffffff;text-align:right">$ 0,00</div>
<div class="cell tx n" style="left:882px;top:689px;width:84px;height:16px;background:#ffffff;text-align:right">$ 0,00</div>
<div class="cell tx n" style="left:967px;top:689px;width:84px;height:16px;background:#ffffff;text-align:right">$ 0,00</div>
<div class="cell tx n" style="left:1052px;top:689px;width:70px;height:16px;background:#ffffff;text-align:right">$ 0,00</div>
<div class="cell tx n" style="left:1123px;top:689px;width:70px;height:16px;background:#ffffff;text-align:right">$ 0,00</div>
<div class="cell tx n" style="left:1194px;top:689px;width:84px;height:16px;background:#ffffff;text-align:right">$ 0,00</div>
<div class="cell tx n" style="left:1279px;top:689px;width:84px;height:16px;background:#ffffff;text-align:right">$ 0,00</div>
<div class="cell tx n" style="left:1364px;top:689px;width:84px;height:16px;background:#ffffff;text-align:right">$ 0,00</div>
<div class="cell tx n" style="left:1449px;top:689px;width:84px;height:16px;background:#ffffff;text-align:right">$ 0,00</div>
<div class="cell tx n" style="left:1534px;top:689px;width:83px;height:16px;background:#ffffff;text-align:right;word-spacing:0.6px">0,00 %</div>
<div class="cell tx b" style="left:145px;top:706px;width:140px;height:16px;background:#ffffff;text-align:left">congelados</div>
<div class="cell tx n" style="left:286px;top:706px;width:85px;height:16px;background:#ffffff;text-align:right">$ 0,00</div>
<div class="cell tx n" style="left:372px;top:706px;width:84px;height:16px;background:#ffffff;text-align:right">$ 0,00</div>
<div class="cell tx n" style="left:457px;top:706px;width:84px;height:16px;background:#ffffff;text-align:right">$ 0</div>
<div class="cell tx n" style="left:542px;top:706px;width:84px;height:16px;background:#ffffff;text-align:right">$ 0,00</div>
<div class="cell tx n" style="left:627px;top:706px;width:84px;height:16px;background:#ffffff;text-align:right;word-spacing:0.6px">0,00 %</div>
<div class="cell tx n" style="left:712px;top:706px;width:84px;height:16px;background:#ffffff;text-align:right">$ 0,00</div>
<div class="cell tx n" style="left:797px;top:706px;width:84px;height:16px;background:#ffffff;text-align:right">$ 0,00</div>
<div class="cell tx n" style="left:882px;top:706px;width:84px;height:16px;background:#ffffff;text-align:right">$ 0,00</div>
<div class="cell tx n" style="left:967px;top:706px;width:84px;height:16px;background:#ffffff;text-align:right">$ 0,00</div>
<div class="cell tx n" style="left:1052px;top:706px;width:70px;height:16px;background:#ffffff;text-align:right">$ 0,00</div>
<div class="cell tx n" style="left:1123px;top:706px;width:70px;height:16px;background:#ffffff;text-align:right">$ 0,00</div>
<div class="cell tx n" style="left:1194px;top:706px;width:84px;height:16px;background:#ffffff;text-align:right">$ 0,00</div>
<div class="cell tx n" style="left:1279px;top:706px;width:84px;height:16px;background:#ffffff;text-align:right">$ 0,00</div>
<div class="cell tx n" style="left:1364px;top:706px;width:84px;height:16px;background:#ffffff;text-align:right">$ 0,00</div>
<div class="cell tx n" style="left:1449px;top:706px;width:84px;height:16px;background:#ffffff;text-align:right">$ 0,00</div>
<div class="cell tx n" style="left:1534px;top:706px;width:83px;height:16px;background:#ffffff;text-align:right;word-spacing:0.6px">0,00 %</div>
<div class="cell tx b" style="left:145px;top:723px;width:140px;height:16px;background:#ffffff;text-align:left">Desechables</div>
<div class="cell tx n" style="left:286px;top:723px;width:85px;height:16px;background:#ffffff;text-align:right">$ 0,00</div>
<div class="cell tx n" style="left:372px;top:723px;width:84px;height:16px;background:#ffffff;text-align:right">$ 0,00</div>
<div class="cell tx n" style="left:457px;top:723px;width:84px;height:16px;background:#ffffff;text-align:right">$ 0</div>
<div class="cell tx n" style="left:542px;top:723px;width:84px;height:16px;background:#ffffff;text-align:right">$ 0,00</div>
<div class="cell tx n" style="left:627px;top:723px;width:84px;height:16px;background:#ffffff;text-align:right;word-spacing:0.6px">0,00 %</div>
<div class="cell tx n" style="left:712px;top:723px;width:84px;height:16px;background:#ffffff;text-align:right">$ 0,00</div>
<div class="cell tx n" style="left:797px;top:723px;width:84px;height:16px;background:#ffffff;text-align:right">$ 0,00</div>
<div class="cell tx n" style="left:882px;top:723px;width:84px;height:16px;background:#ffffff;text-align:right">$ 0,00</div>
<div class="cell tx n" style="left:967px;top:723px;width:84px;height:16px;background:#ffffff;text-align:right">$ 0,00</div>
<div class="cell tx n" style="left:1052px;top:723px;width:70px;height:16px;background:#ffffff;text-align:right">$ 0,00</div>
<div class="cell tx n" style="left:1123px;top:723px;width:70px;height:16px;background:#ffffff;text-align:right">$ 0,00</div>
<div class="cell tx n" style="left:1194px;top:723px;width:84px;height:16px;background:#ffffff;text-align:right">$ 0,00</div>
<div class="cell tx n" style="left:1279px;top:723px;width:84px;height:16px;background:#ffffff;text-align:right">$ 0,00</div>
<div class="cell tx n" style="left:1364px;top:723px;width:84px;height:16px;background:#ffffff;text-align:right">$ 0,00</div>
<div class="cell tx n" style="left:1449px;top:723px;width:84px;height:16px;background:#ffffff;text-align:right">$ 0,00</div>
<div class="cell tx n" style="left:1534px;top:723px;width:83px;height:16px;background:#ffffff;text-align:right;word-spacing:0.6px">0,00 %</div>
<div class="cell tx b" style="left:145px;top:740px;width:140px;height:16px;background:#ffffff;text-align:left">Elementos de Aseo</div>
<div class="cell tx n" style="left:286px;top:740px;width:85px;height:16px;background:#ffffff;text-align:right">$ 0,00</div>
<div class="cell tx n" style="left:372px;top:740px;width:84px;height:16px;background:#ffffff;text-align:right">$ 0,00</div>
<div class="cell tx n" style="left:457px;top:740px;width:84px;height:16px;background:#ffffff;text-align:right">$ 0</div>
<div class="cell tx n" style="left:542px;top:740px;width:84px;height:16px;background:#ffffff;text-align:right">$ 0,00</div>
<div class="cell tx n" style="left:627px;top:740px;width:84px;height:16px;background:#ffffff;text-align:right;word-spacing:0.6px">0,00 %</div>
<div class="cell tx n" style="left:712px;top:740px;width:84px;height:16px;background:#ffffff;text-align:right">$ 0,00</div>
<div class="cell tx n" style="left:797px;top:740px;width:84px;height:16px;background:#ffffff;text-align:right">$ 0,00</div>
<div class="cell tx n" style="left:882px;top:740px;width:84px;height:16px;background:#ffffff;text-align:right">$ 0,00</div>
<div class="cell tx n" style="left:967px;top:740px;width:84px;height:16px;background:#ffffff;text-align:right">$ 0,00</div>
<div class="cell tx n" style="left:1052px;top:740px;width:70px;height:16px;background:#ffffff;text-align:right">$ 0,00</div>
<div class="cell tx n" style="left:1123px;top:740px;width:70px;height:16px;background:#ffffff;text-align:right">$ 0,00</div>
<div class="cell tx n" style="left:1194px;top:740px;width:84px;height:16px;background:#ffffff;text-align:right">$ 0,00</div>
<div class="cell tx n" style="left:1279px;top:740px;width:84px;height:16px;background:#ffffff;text-align:right">$ 0,00</div>
<div class="cell tx n" style="left:1364px;top:740px;width:84px;height:16px;background:#ffffff;text-align:right">$ 0,00</div>
<div class="cell tx n" style="left:1449px;top:740px;width:84px;height:16px;background:#ffffff;text-align:right">$ 0,00</div>
<div class="cell tx n" style="left:1534px;top:740px;width:83px;height:16px;background:#ffffff;text-align:right;word-spacing:0.6px">0,00 %</div>
<div class="cell tx b" style="left:145px;top:757px;width:140px;height:16px;background:#ffffff;text-align:left">Empaques</div>
<div class="cell tx n" style="left:286px;top:757px;width:85px;height:16px;background:#ffffff;text-align:right">$ 0,00</div>
<div class="cell tx n" style="left:372px;top:757px;width:84px;height:16px;background:#ffffff;text-align:right">$ 0,00</div>
<div class="cell tx n" style="left:457px;top:757px;width:84px;height:16px;background:#ffffff;text-align:right">$ 0</div>
<div class="cell tx n" style="left:542px;top:757px;width:84px;height:16px;background:#ffffff;text-align:right">$ 0,00</div>
<div class="cell tx n" style="left:627px;top:757px;width:84px;height:16px;background:#ffffff;text-align:right;word-spacing:0.6px">0,00 %</div>
<div class="cell tx n" style="left:712px;top:757px;width:84px;height:16px;background:#ffffff;text-align:right">$ 0,00</div>
<div class="cell tx n" style="left:797px;top:757px;width:84px;height:16px;background:#ffffff;text-align:right">$ 0,00</div>
<div class="cell tx n" style="left:882px;top:757px;width:84px;height:16px;background:#ffffff;text-align:right">$ 0,00</div>
<div class="cell tx n" style="left:967px;top:757px;width:84px;height:16px;background:#ffffff;text-align:right">$ 0,00</div>
<div class="cell tx n" style="left:1052px;top:757px;width:70px;height:16px;background:#ffffff;text-align:right">$ 0,00</div>
<div class="cell tx n" style="left:1123px;top:757px;width:70px;height:16px;background:#ffffff;text-align:right">$ 0,00</div>
<div class="cell tx n" style="left:1194px;top:757px;width:84px;height:16px;background:#ffffff;text-align:right">$ 0,00</div>
<div class="cell tx n" style="left:1279px;top:757px;width:84px;height:16px;background:#ffffff;text-align:right">$ 0,00</div>
<div class="cell tx n" style="left:1364px;top:757px;width:84px;height:16px;background:#ffffff;text-align:right">$ 0,00</div>
<div class="cell tx n" style="left:1449px;top:757px;width:84px;height:16px;background:#ffffff;text-align:right">$ 0,00</div>
<div class="cell tx n" style="left:1534px;top:757px;width:83px;height:16px;background:#ffffff;text-align:right;word-spacing:0.6px">0,00 %</div>
<div class="cell tx b" style="left:145px;top:774px;width:140px;height:16px;background:#ffffff;text-align:left">Filetes</div>
<div class="cell tx n" style="left:286px;top:774px;width:85px;height:16px;background:#ffffff;text-align:right">$ 0,00</div>
<div class="cell tx n" style="left:372px;top:774px;width:84px;height:16px;background:#ffffff;text-align:right">$ 0,00</div>
<div class="cell tx n" style="left:457px;top:774px;width:84px;height:16px;background:#ffffff;text-align:right">$ 0</div>
<div class="cell tx n" style="left:542px;top:774px;width:84px;height:16px;background:#ffffff;text-align:right">$ 0,00</div>
<div class="cell tx n" style="left:627px;top:774px;width:84px;height:16px;background:#ffffff;text-align:right;word-spacing:0.6px">0,00 %</div>
<div class="cell tx n" style="left:712px;top:774px;width:84px;height:16px;background:#ffffff;text-align:right">$ 0,00</div>
<div class="cell tx n" style="left:797px;top:774px;width:84px;height:16px;background:#ffffff;text-align:right">$ 0,00</div>
<div class="cell tx n" style="left:882px;top:774px;width:84px;height:16px;background:#ffffff;text-align:right">$ 0,00</div>
<div class="cell tx n" style="left:967px;top:774px;width:84px;height:16px;background:#ffffff;text-align:right">$ 0,00</div>
<div class="cell tx n" style="left:1052px;top:774px;width:70px;height:16px;background:#ffffff;text-align:right">$ 0,00</div>
<div class="cell tx n" style="left:1123px;top:774px;width:70px;height:16px;background:#ffffff;text-align:right">$ 0,00</div>
<div class="cell tx n" style="left:1194px;top:774px;width:84px;height:16px;background:#ffffff;text-align:right">$ 0,00</div>
<div class="cell tx n" style="left:1279px;top:774px;width:84px;height:16px;background:#ffffff;text-align:right">$ 0,00</div>
<div class="cell tx n" style="left:1364px;top:774px;width:84px;height:16px;background:#ffffff;text-align:right">$ 0,00</div>
<div class="cell tx n" style="left:1449px;top:774px;width:84px;height:16px;background:#ffffff;text-align:right">$ 0,00</div>
<div class="cell tx n" style="left:1534px;top:774px;width:83px;height:16px;background:#ffffff;text-align:right;word-spacing:0.6px">0,00 %</div>
<svg style="position:absolute;left:0;top:0" width="1673" height="791"><ellipse cx="1592" cy="231.8" rx="65.3" ry="39.3" transform="rotate(-2 1592 231.8)" fill="none" stroke="#23a94d" stroke-width="5"/></svg>
</body></html>
